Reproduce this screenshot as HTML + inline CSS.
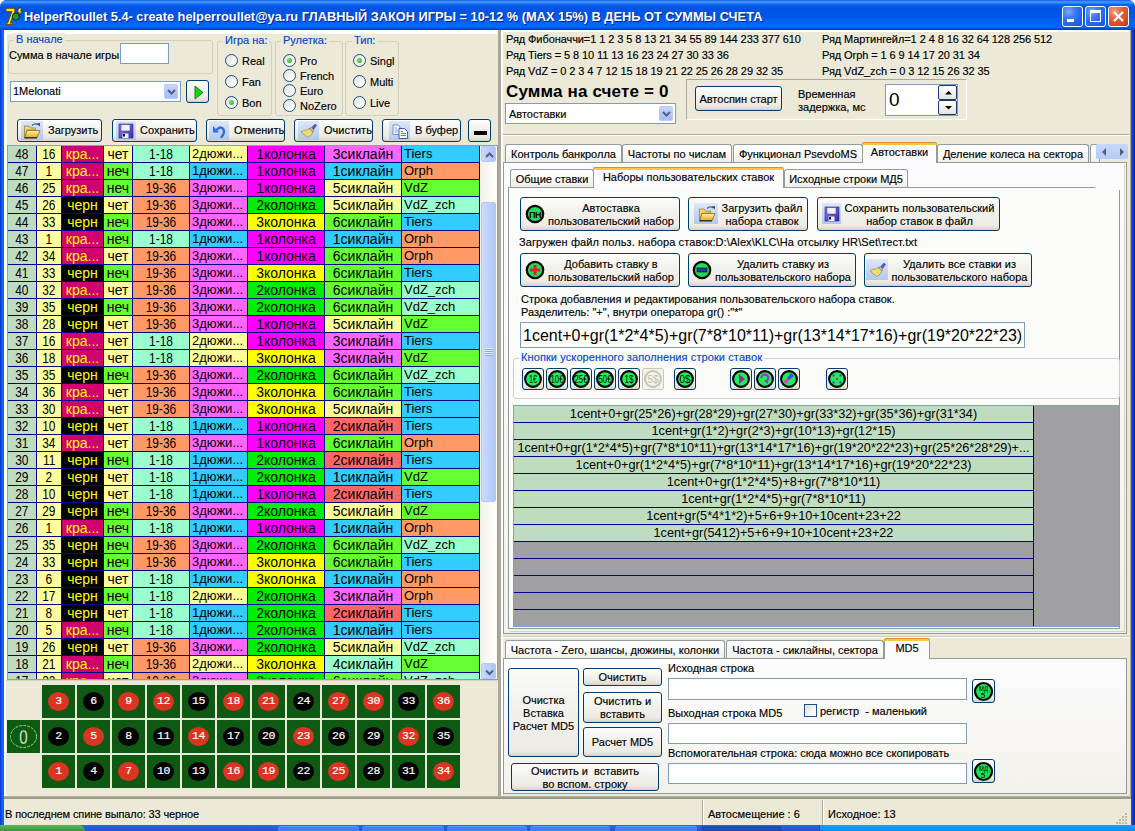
<!DOCTYPE html>
<html><head><meta charset="utf-8"><style>
*{box-sizing:border-box;margin:0;padding:0}
html,body{width:1135px;height:831px;overflow:hidden;background:#fff;position:relative}
body{font-family:"Liberation Sans",sans-serif;font-size:11px;color:#000;-webkit-text-stroke:0.15px currentColor}
div{position:absolute}
.t{white-space:nowrap;line-height:13px}
.ct{display:flex;align-items:center;justify-content:center;text-align:center;white-space:nowrap;line-height:13px}
.ct span{position:static}
.btn .ct{padding-top:1px}
.btn{border:1px solid #003C74;border-radius:3px;background:linear-gradient(180deg,#FFFFFF 0px,#FAFAF8 3px,#F1F0EB 50%,#ECEBE5 calc(100% - 5px),#E2DFD5 calc(100% - 2px),#D3CEC2 100%);}
.gb{border:1px solid #D0D0BF;border-radius:3px}
.rad{width:13px;height:13px;border-radius:50%;border:1px solid #1C5180;background:linear-gradient(135deg,#DCDCD7 0%,#FFFFFF 80%)}
.rad i{position:absolute;left:3px;top:3px;width:5px;height:5px;border-radius:50%;background:radial-gradient(circle at 40% 40%,#7BE46A,#21A121)}
.icsq{background:linear-gradient(180deg,#DDE8F8,#B0C8F0)}
</style></head>
<body>
<div style="left:0px;top:0px;width:1135px;height:831px;background:#0053E1;border-radius:7px 7px 0 0;"></div><div style="left:0px;top:28px;width:4px;height:803px;background:linear-gradient(90deg,#0831D9,#166AEE 60%,#0D5EE8);"></div><div style="left:1131px;top:28px;width:4px;height:803px;background:linear-gradient(90deg,#0D5EE8,#0831D9 60%,#001EA0);"></div><div style="left:0px;top:0px;width:1135px;height:30px;border-radius:7px 7px 0 0;background:linear-gradient(180deg,#0848D0 0px,#3A90FF 1px,#3A90FF 3px,#0A6CF8 4px,#0858E4 6px,#0054E2 9px,#0056E8 17px,#0062F8 21px,#0067FF 27px,#0058EE 28px,#0044CC 29px,#0040C4 30px);"></div><svg style="position:absolute;left:2px;top:4px;overflow:visible" width="24" height="24" viewBox="0 0 24 24"><path d="M4 4.3 L12.8 4.3 L12.8 7.2 L8.2 19.2 L11.6 19.2 L11.6 20.6 L3.8 20.6 L4.2 19.2 L5.6 19.2 L10 7.6 L4 7.6 Z" fill="#FFEE10" stroke="#7A3A00" stroke-width="0.9"/><circle cx="13.8" cy="12.6" r="3.5" fill="#1E9A2E" stroke="#0A200A" stroke-width="0.9"/><path d="M16.6 4.2 L20 4 L18.6 7.2 L20.6 7.2 L16.2 11.4 L17.4 8.6 L15.4 8.6 Z" fill="#FFEE10" stroke="#201000" stroke-width="0.6"/></svg><div class="t" style="left:24px;top:9px;color:#fff;font-weight:bold;font-size:12.8px;line-height:16px;text-shadow:1px 1px 0 #0A1E8A;-webkit-text-stroke:0;">HelperRoullet 5.4- create helperroullet@ya.ru ГЛАВНЫЙ ЗАКОН ИГРЫ = 10-12 % (MAX 15%) В ДЕНЬ ОТ СУММЫ СЧЕТА</div><div style="left:1062px;top:6px;width:21px;height:21px;border:1px solid #fff;border-radius:3px;background:radial-gradient(circle at 30% 25%,#7EA8FA 0%,#3A78F4 35%,#2260E8 70%,#1A50D8 100%);"><div style="left:4px;top:12px;width:7px;height:3px;background:#fff;"></div></div><div style="left:1085px;top:6px;width:21px;height:21px;border:1px solid #fff;border-radius:3px;background:radial-gradient(circle at 30% 25%,#7EA8FA 0%,#3A78F4 35%,#2260E8 70%,#1A50D8 100%);"><div style="left:4px;top:3px;width:11px;height:12px;border:1px solid #fff;border-top-width:3px;"></div></div><div style="left:1108px;top:6px;width:21px;height:21px;border:1px solid #fff;border-radius:3px;background:radial-gradient(circle at 30% 25%,#F4A080 0%,#E3603C 40%,#D24420 80%,#B83010 100%);"><svg style="position:absolute;left:3px;top:3px;overflow:visible" width="13" height="13" viewBox="0 0 13 13"><path d="M2 2 L11 11 M11 2 L2 11" stroke="#fff" stroke-width="2.2"/></svg></div><div style="left:4px;top:30px;width:1127px;height:795px;background:#ECE9D8;"></div><div style="left:4px;top:30px;width:493px;height:4px;background:#fff;"></div><div style="left:4px;top:30px;width:3px;height:650px;background:#fff;"></div><div style="left:4px;top:680px;width:2px;height:116px;background:#fff;"></div><div style="left:498px;top:30px;width:3px;height:766px;background:#ACA899;"></div><div style="left:501px;top:30px;width:2px;height:766px;background:#fff;"></div><div style="left:503px;top:30px;width:626px;height:2px;background:#fff;"></div><div style="left:1130px;top:30px;width:1px;height:766px;background:#ACA899;"></div><div style="left:0px;top:825px;width:1135px;height:6px;background:linear-gradient(180deg,#3168D5,#245DDA 40%,#2456D0);"></div><div style="left:0px;top:825px;width:85px;height:6px;background:linear-gradient(180deg,#5AB85A,#3C963C);border-radius:0 8px 0 0;"></div><div style="left:278px;top:826px;width:81px;height:5px;background:#3C81F3;border-radius:3px 3px 0 0;border-top:1px solid #5A9AF8;"></div><div style="left:362px;top:826px;width:82px;height:5px;background:#3C81F3;border-radius:3px 3px 0 0;border-top:1px solid #5A9AF8;"></div><div style="left:447px;top:826px;width:80px;height:5px;background:#3C81F3;border-radius:3px 3px 0 0;border-top:1px solid #5A9AF8;"></div><div style="left:530px;top:826px;width:80px;height:5px;background:#3C81F3;border-radius:3px 3px 0 0;border-top:1px solid #5A9AF8;"></div><div style="left:615px;top:826px;width:82px;height:5px;background:#3C81F3;border-radius:3px 3px 0 0;border-top:1px solid #5A9AF8;"></div><div style="left:701px;top:826px;width:81px;height:5px;background:#1E4FB0;border-radius:3px 3px 0 0;"></div><div style="left:819px;top:825px;width:316px;height:6px;background:linear-gradient(180deg,#18A0F8,#0F8AE8);border-left:1px solid #0A50C0;"></div>
<div class="gb" style="left:8px;top:40px;width:205px;height:34px;"></div><div class="t" style="left:14px;top:33px;color:#0046D5;background:#ECE9D8;padding:0 2px;line-height:13px;">В начале</div><div class="t" style="left:9px;top:48.5px;font-size:11px;">Сумма в начале игры</div><div style="left:120px;top:43px;width:49px;height:21px;background:#fff;border:1px solid #7F9DB9;"></div><div style="left:10px;top:81px;width:171px;height:21px;background:#fff;border:1px solid #7F9DB9;"><div class="t" style="left:2px;top:3px;font-size:11px;">1Melonati</div></div><div style="left:164px;top:84px;width:14px;height:15px;border-radius:2px;background:linear-gradient(180deg,#C6D5FB,#B4C8F6 50%,#A6BDF4);border:1px solid #B9CCF6;"><svg style="position:absolute;left:2px;top:4px;overflow:visible" width="9" height="6" viewBox="0 0 9 6"><path d="M1 1 L4.5 4.5 L8 1" fill="none" stroke="#4D6185" stroke-width="2"/></svg></div><div class="btn" style="left:186px;top:80px;width:23px;height:23px;"><svg style="position:absolute;left:7px;top:4px;overflow:visible" width="10" height="15" viewBox="0 0 10 15"><path d="M1 1 L9 7.5 L1 14 Z" fill="#16D416" stroke="#0A7A0A" stroke-width="0.9"/></svg></div><div class="gb" style="left:217px;top:41px;width:55px;height:75px;"></div><div class="t" style="left:223px;top:34px;color:#0046D5;background:#ECE9D8;padding:0 2px;line-height:13px;">Игра на:</div><div class="rad" style="left:225.0px;top:54.0px;"></div><div class="t" style="left:242px;top:54.5px;line-height:13px;">Real</div><div class="rad" style="left:225.0px;top:75.0px;"></div><div class="t" style="left:242px;top:75.5px;line-height:13px;">Fan</div><div class="rad" style="left:225.0px;top:96.0px;"><i></i></div><div class="t" style="left:242px;top:96.5px;line-height:13px;">Bon</div><div class="gb" style="left:275px;top:41px;width:68px;height:75px;"></div><div class="t" style="left:281px;top:34px;color:#0046D5;background:#ECE9D8;padding:0 2px;line-height:13px;">Рулетка:</div><div class="rad" style="left:283.0px;top:54.0px;"><i></i></div><div class="t" style="left:300px;top:54.5px;line-height:13px;">Pro</div><div class="rad" style="left:283.0px;top:69.0px;"></div><div class="t" style="left:300px;top:69.5px;line-height:13px;">French</div><div class="rad" style="left:283.0px;top:84.0px;"></div><div class="t" style="left:300px;top:84.5px;line-height:13px;">Euro</div><div class="rad" style="left:283.0px;top:99.0px;"></div><div class="t" style="left:300px;top:99.5px;line-height:13px;">NoZero</div><div class="gb" style="left:345px;top:41px;width:54px;height:75px;"></div><div class="t" style="left:352px;top:34px;color:#0046D5;background:#ECE9D8;padding:0 2px;line-height:13px;">Тип:</div><div class="rad" style="left:353.0px;top:54.0px;"><i></i></div><div class="t" style="left:370px;top:54.5px;line-height:13px;">Singl</div><div class="rad" style="left:353.0px;top:75.0px;"></div><div class="t" style="left:370px;top:75.5px;line-height:13px;">Multi</div><div class="rad" style="left:353.0px;top:96.0px;"></div><div class="t" style="left:370px;top:96.5px;line-height:13px;">Live</div><div class="btn" style="left:17px;top:119px;width:85px;height:23px;"><div class="icsq" style="left:3px;top:1px;width:22px;height:19px;"></div><svg style="position:absolute;left:3px;top:1px;overflow:visible" width="22" height="20" viewBox="0 0 22 20"><defs><linearGradient id="fg" x1="0" y1="0" x2="0" y2="1"><stop offset="0" stop-color="#FFF4A0"/><stop offset="1" stop-color="#E8A820"/></linearGradient></defs><path d="M3.5 5 L8 5 L9.5 7 L14.5 7 L14.5 9 L6 9 L4 16.5 L3.5 16.5 Z" fill="#F2D870" stroke="#A08040" stroke-width="0.8"/><path d="M6 9.5 L19 9.5 L16 16.8 L3.6 16.8 Z" fill="url(#fg)" stroke="#8A6A20" stroke-width="0.8"/><path d="M3.6 16.8 L16 16.8" stroke="#202020" stroke-width="1.2"/><path d="M11 4.5 Q14 1.5 17.5 4" fill="none" stroke="#4A5A80" stroke-width="1.1"/><path d="M16 2.5 L19 5.5 L19 2 Z" fill="#3A4A70"/></svg><div class="t" style="left:30px;top:4px;font-size:11px;">Загрузить</div></div><div class="btn" style="left:112px;top:119px;width:85px;height:23px;"><div class="icsq" style="left:3px;top:1px;width:20px;height:19px;"></div><svg style="position:absolute;left:3px;top:1px;overflow:visible" width="22" height="20" viewBox="0 0 22 20"><defs><linearGradient id="flg" x1="0" y1="0" x2="1" y2="1"><stop offset="0" stop-color="#8A80F0"/><stop offset="1" stop-color="#3A2AA0"/></linearGradient></defs><rect x="3" y="3" width="14" height="14" fill="url(#flg)" stroke="#2A2080" stroke-width="0.6"/><rect x="5" y="3.6" width="9" height="6.4" fill="#F0F0FA" stroke="#4A40B0" stroke-width="0.6"/><rect x="6.5" y="12.5" width="6" height="4.5" fill="#ECECF8"/><rect x="7" y="13" width="2" height="2.5" fill="#101030"/></svg><div class="t" style="left:27px;top:4px;font-size:11px;">Сохранить</div></div><div class="btn" style="left:206px;top:119px;width:79px;height:23px;"><div class="icsq" style="left:2px;top:1px;width:20px;height:19px;"></div><svg style="position:absolute;left:2px;top:1px;overflow:visible" width="22" height="20" viewBox="0 0 22 20"><path d="M8 8.5 Q12 4.5 14.5 8.5 Q16 12 12.5 16" fill="none" stroke="#2F6FE0" stroke-width="2.4" stroke-linecap="round"/><path d="M4 5 L4 11.5 L10 11.5 Z" fill="#2F6FE0"/></svg><div class="t" style="left:27px;top:4px;font-size:11px;">Отменить</div></div><div class="btn" style="left:294px;top:119px;width:79px;height:23px;"><div class="icsq" style="left:3px;top:1px;width:21px;height:19px;"></div><svg style="position:absolute;left:3px;top:1px;overflow:visible" width="22" height="20" viewBox="0 0 22 20"><path d="M13.5 7 L16.5 3.5 Q18 3 18.5 4.5 L15.5 8.5 Z" fill="#5A50D0" stroke="#3A3090" stroke-width="0.5"/><path d="M11 7.5 L13.5 6.5 L16 9 L15 11 Z" fill="#B8B8C8" stroke="#606070" stroke-width="0.5"/><path d="M3 11 Q6 9 8.5 9 L11 7.5 L15 11 L13.5 13.5 Q12 15.5 9.5 16.5 Z" fill="#EEDC70" stroke="#8A7A30" stroke-width="0.6"/></svg><div class="t" style="left:29px;top:4px;font-size:11px;">Очистить</div></div><div class="btn" style="left:382px;top:119px;width:79px;height:23px;"><div class="icsq" style="left:6px;top:1px;width:21px;height:19px;"></div><svg style="position:absolute;left:6px;top:1px;overflow:visible" width="22" height="20" viewBox="0 0 22 20"><path d="M4 4 L9 4 L11 6 L11 13.5 L4 13.5 Z" fill="#FAFCFF" stroke="#707890" stroke-width="0.8"/><path d="M5.5 7 H8 M5.5 9 H9.5 M5.5 11 H9.5" stroke="#6A8AD8" stroke-width="0.8"/><path d="M10 7.5 L15.5 7.5 L18.5 10.5 L18.5 17.5 L10 17.5 Z" fill="#FAFCFF" stroke="#2A4AB0" stroke-width="0.9"/><path d="M11.8 10.5 H14 M11.8 12.5 H17 M11.8 14.5 H17" stroke="#3A6AE0" stroke-width="0.9"/></svg><div class="t" style="left:32px;top:4px;font-size:11px;">В буфер</div></div><div class="btn" style="left:468px;top:119px;width:23px;height:23px;"><div style="left:5px;top:11px;width:13px;height:4px;background:#000;"></div></div>
<div style="left:7px;top:145px;width:491px;height:535px;overflow:hidden;border:1px solid #7A9EDF;"><div style="left:0px;top:0px;width:490px;height:535px;background:#000090;"></div><div style="left:0px;top:0px;width:28px;height:16px;background:#C0DCC0;color:#000;font-size:14px;line-height:16px;white-space:nowrap;overflow:hidden;text-align:center;padding-left:0px;-webkit-text-stroke:0"><span style="display:inline-block;position:static;transform:scaleX(0.85);transform-origin:50% 50%">48</span></div><div style="left:29px;top:0px;width:24px;height:16px;background:#FFFFA0;color:#000;font-size:14px;line-height:16px;white-space:nowrap;overflow:hidden;text-align:center;padding-left:0px;-webkit-text-stroke:0"><span style="display:inline-block;position:static;transform:scaleX(0.85);transform-origin:50% 50%">16</span></div><div style="left:54px;top:0px;width:41px;height:16px;background:#D0006C;color:#FFFF00;font-size:14px;line-height:16px;white-space:nowrap;overflow:hidden;text-align:center;padding-left:0px;-webkit-text-stroke:0">кра...</div><div style="left:96px;top:0px;width:28px;height:16px;background:#FFFFA0;color:#000;font-size:14px;line-height:16px;white-space:nowrap;overflow:hidden;text-align:center;padding-left:0px;-webkit-text-stroke:0">чет</div><div style="left:125px;top:0px;width:56px;height:16px;background:#99FFCC;color:#000;font-size:14px;line-height:16px;white-space:nowrap;overflow:hidden;text-align:center;padding-left:0px;-webkit-text-stroke:0"><span style="display:inline-block;position:static;transform:scaleX(0.85);transform-origin:50% 50%">1-18</span></div><div style="left:182px;top:0px;width:57px;height:16px;background:#FFFF99;color:#000;font-size:13px;line-height:16px;white-space:nowrap;overflow:hidden;text-align:left;padding-left:2px;-webkit-text-stroke:0">2дюжи...</div><div style="left:240px;top:0px;width:76px;height:16px;background:#FF00FF;color:#000;font-size:14px;line-height:16px;white-space:nowrap;overflow:hidden;text-align:center;padding-left:0px;-webkit-text-stroke:0">1колонка</div><div style="left:317px;top:0px;width:76px;height:16px;background:#FF66FF;color:#000;font-size:14px;line-height:16px;white-space:nowrap;overflow:hidden;text-align:center;padding-left:0px;-webkit-text-stroke:0">3сиклайн</div><div style="left:394px;top:0px;width:77px;height:16px;background:#33CCFF;color:#000;font-size:13px;line-height:16px;white-space:nowrap;overflow:hidden;text-align:left;padding-left:2px;-webkit-text-stroke:0">Tiers</div><div style="left:0px;top:17px;width:28px;height:16px;background:#C0DCC0;color:#000;font-size:14px;line-height:16px;white-space:nowrap;overflow:hidden;text-align:center;padding-left:0px;-webkit-text-stroke:0"><span style="display:inline-block;position:static;transform:scaleX(0.85);transform-origin:50% 50%">47</span></div><div style="left:29px;top:17px;width:24px;height:16px;background:#FFFFA0;color:#000;font-size:14px;line-height:16px;white-space:nowrap;overflow:hidden;text-align:center;padding-left:0px;-webkit-text-stroke:0"><span style="display:inline-block;position:static;transform:scaleX(0.85);transform-origin:50% 50%">1</span></div><div style="left:54px;top:17px;width:41px;height:16px;background:#D0006C;color:#FFFF00;font-size:14px;line-height:16px;white-space:nowrap;overflow:hidden;text-align:center;padding-left:0px;-webkit-text-stroke:0">кра...</div><div style="left:96px;top:17px;width:28px;height:16px;background:#66FF33;color:#000;font-size:14px;line-height:16px;white-space:nowrap;overflow:hidden;text-align:center;padding-left:0px;-webkit-text-stroke:0">неч</div><div style="left:125px;top:17px;width:56px;height:16px;background:#99FFCC;color:#000;font-size:14px;line-height:16px;white-space:nowrap;overflow:hidden;text-align:center;padding-left:0px;-webkit-text-stroke:0"><span style="display:inline-block;position:static;transform:scaleX(0.85);transform-origin:50% 50%">1-18</span></div><div style="left:182px;top:17px;width:57px;height:16px;background:#33CCFF;color:#000;font-size:13px;line-height:16px;white-space:nowrap;overflow:hidden;text-align:left;padding-left:2px;-webkit-text-stroke:0">1дюжи...</div><div style="left:240px;top:17px;width:76px;height:16px;background:#FF00FF;color:#000;font-size:14px;line-height:16px;white-space:nowrap;overflow:hidden;text-align:center;padding-left:0px;-webkit-text-stroke:0">1колонка</div><div style="left:317px;top:17px;width:76px;height:16px;background:#33CCFF;color:#000;font-size:14px;line-height:16px;white-space:nowrap;overflow:hidden;text-align:center;padding-left:0px;-webkit-text-stroke:0">1сиклайн</div><div style="left:394px;top:17px;width:77px;height:16px;background:#FF9966;color:#000;font-size:13px;line-height:16px;white-space:nowrap;overflow:hidden;text-align:left;padding-left:2px;-webkit-text-stroke:0">Orph</div><div style="left:0px;top:34px;width:28px;height:16px;background:#C0DCC0;color:#000;font-size:14px;line-height:16px;white-space:nowrap;overflow:hidden;text-align:center;padding-left:0px;-webkit-text-stroke:0"><span style="display:inline-block;position:static;transform:scaleX(0.85);transform-origin:50% 50%">46</span></div><div style="left:29px;top:34px;width:24px;height:16px;background:#FFFFA0;color:#000;font-size:14px;line-height:16px;white-space:nowrap;overflow:hidden;text-align:center;padding-left:0px;-webkit-text-stroke:0"><span style="display:inline-block;position:static;transform:scaleX(0.85);transform-origin:50% 50%">25</span></div><div style="left:54px;top:34px;width:41px;height:16px;background:#D0006C;color:#FFFF00;font-size:14px;line-height:16px;white-space:nowrap;overflow:hidden;text-align:center;padding-left:0px;-webkit-text-stroke:0">кра...</div><div style="left:96px;top:34px;width:28px;height:16px;background:#66FF33;color:#000;font-size:14px;line-height:16px;white-space:nowrap;overflow:hidden;text-align:center;padding-left:0px;-webkit-text-stroke:0">неч</div><div style="left:125px;top:34px;width:56px;height:16px;background:#FF9966;color:#000;font-size:14px;line-height:16px;white-space:nowrap;overflow:hidden;text-align:center;padding-left:0px;-webkit-text-stroke:0"><span style="display:inline-block;position:static;transform:scaleX(0.85);transform-origin:50% 50%">19-36</span></div><div style="left:182px;top:34px;width:57px;height:16px;background:#FF66FF;color:#000;font-size:13px;line-height:16px;white-space:nowrap;overflow:hidden;text-align:left;padding-left:2px;-webkit-text-stroke:0">3дюжи...</div><div style="left:240px;top:34px;width:76px;height:16px;background:#FF00FF;color:#000;font-size:14px;line-height:16px;white-space:nowrap;overflow:hidden;text-align:center;padding-left:0px;-webkit-text-stroke:0">1колонка</div><div style="left:317px;top:34px;width:76px;height:16px;background:#FFFF99;color:#000;font-size:14px;line-height:16px;white-space:nowrap;overflow:hidden;text-align:center;padding-left:0px;-webkit-text-stroke:0">5сиклайн</div><div style="left:394px;top:34px;width:77px;height:16px;background:#66FF33;color:#000;font-size:13px;line-height:16px;white-space:nowrap;overflow:hidden;text-align:left;padding-left:2px;-webkit-text-stroke:0">VdZ</div><div style="left:0px;top:51px;width:28px;height:16px;background:#C0DCC0;color:#000;font-size:14px;line-height:16px;white-space:nowrap;overflow:hidden;text-align:center;padding-left:0px;-webkit-text-stroke:0"><span style="display:inline-block;position:static;transform:scaleX(0.85);transform-origin:50% 50%">45</span></div><div style="left:29px;top:51px;width:24px;height:16px;background:#FFFFA0;color:#000;font-size:14px;line-height:16px;white-space:nowrap;overflow:hidden;text-align:center;padding-left:0px;-webkit-text-stroke:0"><span style="display:inline-block;position:static;transform:scaleX(0.85);transform-origin:50% 50%">26</span></div><div style="left:54px;top:51px;width:41px;height:16px;background:#000;color:#FFFF00;font-size:14px;line-height:16px;white-space:nowrap;overflow:hidden;text-align:center;padding-left:0px;-webkit-text-stroke:0">черн</div><div style="left:96px;top:51px;width:28px;height:16px;background:#FFFFA0;color:#000;font-size:14px;line-height:16px;white-space:nowrap;overflow:hidden;text-align:center;padding-left:0px;-webkit-text-stroke:0">чет</div><div style="left:125px;top:51px;width:56px;height:16px;background:#FF9966;color:#000;font-size:14px;line-height:16px;white-space:nowrap;overflow:hidden;text-align:center;padding-left:0px;-webkit-text-stroke:0"><span style="display:inline-block;position:static;transform:scaleX(0.85);transform-origin:50% 50%">19-36</span></div><div style="left:182px;top:51px;width:57px;height:16px;background:#FF66FF;color:#000;font-size:13px;line-height:16px;white-space:nowrap;overflow:hidden;text-align:left;padding-left:2px;-webkit-text-stroke:0">3дюжи...</div><div style="left:240px;top:51px;width:76px;height:16px;background:#00EE00;color:#000;font-size:14px;line-height:16px;white-space:nowrap;overflow:hidden;text-align:center;padding-left:0px;-webkit-text-stroke:0">2колонка</div><div style="left:317px;top:51px;width:76px;height:16px;background:#FFFF99;color:#000;font-size:14px;line-height:16px;white-space:nowrap;overflow:hidden;text-align:center;padding-left:0px;-webkit-text-stroke:0">5сиклайн</div><div style="left:394px;top:51px;width:77px;height:16px;background:#99FFCC;color:#000;font-size:13px;line-height:16px;white-space:nowrap;overflow:hidden;text-align:left;padding-left:2px;-webkit-text-stroke:0">VdZ_zch</div><div style="left:0px;top:68px;width:28px;height:16px;background:#C0DCC0;color:#000;font-size:14px;line-height:16px;white-space:nowrap;overflow:hidden;text-align:center;padding-left:0px;-webkit-text-stroke:0"><span style="display:inline-block;position:static;transform:scaleX(0.85);transform-origin:50% 50%">44</span></div><div style="left:29px;top:68px;width:24px;height:16px;background:#FFFFA0;color:#000;font-size:14px;line-height:16px;white-space:nowrap;overflow:hidden;text-align:center;padding-left:0px;-webkit-text-stroke:0"><span style="display:inline-block;position:static;transform:scaleX(0.85);transform-origin:50% 50%">33</span></div><div style="left:54px;top:68px;width:41px;height:16px;background:#000;color:#FFFF00;font-size:14px;line-height:16px;white-space:nowrap;overflow:hidden;text-align:center;padding-left:0px;-webkit-text-stroke:0">черн</div><div style="left:96px;top:68px;width:28px;height:16px;background:#66FF33;color:#000;font-size:14px;line-height:16px;white-space:nowrap;overflow:hidden;text-align:center;padding-left:0px;-webkit-text-stroke:0">неч</div><div style="left:125px;top:68px;width:56px;height:16px;background:#FF9966;color:#000;font-size:14px;line-height:16px;white-space:nowrap;overflow:hidden;text-align:center;padding-left:0px;-webkit-text-stroke:0"><span style="display:inline-block;position:static;transform:scaleX(0.85);transform-origin:50% 50%">19-36</span></div><div style="left:182px;top:68px;width:57px;height:16px;background:#FF66FF;color:#000;font-size:13px;line-height:16px;white-space:nowrap;overflow:hidden;text-align:left;padding-left:2px;-webkit-text-stroke:0">3дюжи...</div><div style="left:240px;top:68px;width:76px;height:16px;background:#FFFF00;color:#000;font-size:14px;line-height:16px;white-space:nowrap;overflow:hidden;text-align:center;padding-left:0px;-webkit-text-stroke:0">3колонка</div><div style="left:317px;top:68px;width:76px;height:16px;background:#66FF33;color:#000;font-size:14px;line-height:16px;white-space:nowrap;overflow:hidden;text-align:center;padding-left:0px;-webkit-text-stroke:0">6сиклайн</div><div style="left:394px;top:68px;width:77px;height:16px;background:#33CCFF;color:#000;font-size:13px;line-height:16px;white-space:nowrap;overflow:hidden;text-align:left;padding-left:2px;-webkit-text-stroke:0">Tiers</div><div style="left:0px;top:85px;width:28px;height:16px;background:#C0DCC0;color:#000;font-size:14px;line-height:16px;white-space:nowrap;overflow:hidden;text-align:center;padding-left:0px;-webkit-text-stroke:0"><span style="display:inline-block;position:static;transform:scaleX(0.85);transform-origin:50% 50%">43</span></div><div style="left:29px;top:85px;width:24px;height:16px;background:#FFFFA0;color:#000;font-size:14px;line-height:16px;white-space:nowrap;overflow:hidden;text-align:center;padding-left:0px;-webkit-text-stroke:0"><span style="display:inline-block;position:static;transform:scaleX(0.85);transform-origin:50% 50%">1</span></div><div style="left:54px;top:85px;width:41px;height:16px;background:#D0006C;color:#FFFF00;font-size:14px;line-height:16px;white-space:nowrap;overflow:hidden;text-align:center;padding-left:0px;-webkit-text-stroke:0">кра...</div><div style="left:96px;top:85px;width:28px;height:16px;background:#66FF33;color:#000;font-size:14px;line-height:16px;white-space:nowrap;overflow:hidden;text-align:center;padding-left:0px;-webkit-text-stroke:0">неч</div><div style="left:125px;top:85px;width:56px;height:16px;background:#99FFCC;color:#000;font-size:14px;line-height:16px;white-space:nowrap;overflow:hidden;text-align:center;padding-left:0px;-webkit-text-stroke:0"><span style="display:inline-block;position:static;transform:scaleX(0.85);transform-origin:50% 50%">1-18</span></div><div style="left:182px;top:85px;width:57px;height:16px;background:#33CCFF;color:#000;font-size:13px;line-height:16px;white-space:nowrap;overflow:hidden;text-align:left;padding-left:2px;-webkit-text-stroke:0">1дюжи...</div><div style="left:240px;top:85px;width:76px;height:16px;background:#FF00FF;color:#000;font-size:14px;line-height:16px;white-space:nowrap;overflow:hidden;text-align:center;padding-left:0px;-webkit-text-stroke:0">1колонка</div><div style="left:317px;top:85px;width:76px;height:16px;background:#33CCFF;color:#000;font-size:14px;line-height:16px;white-space:nowrap;overflow:hidden;text-align:center;padding-left:0px;-webkit-text-stroke:0">1сиклайн</div><div style="left:394px;top:85px;width:77px;height:16px;background:#FF9966;color:#000;font-size:13px;line-height:16px;white-space:nowrap;overflow:hidden;text-align:left;padding-left:2px;-webkit-text-stroke:0">Orph</div><div style="left:0px;top:102px;width:28px;height:16px;background:#C0DCC0;color:#000;font-size:14px;line-height:16px;white-space:nowrap;overflow:hidden;text-align:center;padding-left:0px;-webkit-text-stroke:0"><span style="display:inline-block;position:static;transform:scaleX(0.85);transform-origin:50% 50%">42</span></div><div style="left:29px;top:102px;width:24px;height:16px;background:#FFFFA0;color:#000;font-size:14px;line-height:16px;white-space:nowrap;overflow:hidden;text-align:center;padding-left:0px;-webkit-text-stroke:0"><span style="display:inline-block;position:static;transform:scaleX(0.85);transform-origin:50% 50%">34</span></div><div style="left:54px;top:102px;width:41px;height:16px;background:#D0006C;color:#FFFF00;font-size:14px;line-height:16px;white-space:nowrap;overflow:hidden;text-align:center;padding-left:0px;-webkit-text-stroke:0">кра...</div><div style="left:96px;top:102px;width:28px;height:16px;background:#FFFFA0;color:#000;font-size:14px;line-height:16px;white-space:nowrap;overflow:hidden;text-align:center;padding-left:0px;-webkit-text-stroke:0">чет</div><div style="left:125px;top:102px;width:56px;height:16px;background:#FF9966;color:#000;font-size:14px;line-height:16px;white-space:nowrap;overflow:hidden;text-align:center;padding-left:0px;-webkit-text-stroke:0"><span style="display:inline-block;position:static;transform:scaleX(0.85);transform-origin:50% 50%">19-36</span></div><div style="left:182px;top:102px;width:57px;height:16px;background:#FF66FF;color:#000;font-size:13px;line-height:16px;white-space:nowrap;overflow:hidden;text-align:left;padding-left:2px;-webkit-text-stroke:0">3дюжи...</div><div style="left:240px;top:102px;width:76px;height:16px;background:#FF00FF;color:#000;font-size:14px;line-height:16px;white-space:nowrap;overflow:hidden;text-align:center;padding-left:0px;-webkit-text-stroke:0">1колонка</div><div style="left:317px;top:102px;width:76px;height:16px;background:#66FF33;color:#000;font-size:14px;line-height:16px;white-space:nowrap;overflow:hidden;text-align:center;padding-left:0px;-webkit-text-stroke:0">6сиклайн</div><div style="left:394px;top:102px;width:77px;height:16px;background:#FF9966;color:#000;font-size:13px;line-height:16px;white-space:nowrap;overflow:hidden;text-align:left;padding-left:2px;-webkit-text-stroke:0">Orph</div><div style="left:0px;top:119px;width:28px;height:16px;background:#C0DCC0;color:#000;font-size:14px;line-height:16px;white-space:nowrap;overflow:hidden;text-align:center;padding-left:0px;-webkit-text-stroke:0"><span style="display:inline-block;position:static;transform:scaleX(0.85);transform-origin:50% 50%">41</span></div><div style="left:29px;top:119px;width:24px;height:16px;background:#FFFFA0;color:#000;font-size:14px;line-height:16px;white-space:nowrap;overflow:hidden;text-align:center;padding-left:0px;-webkit-text-stroke:0"><span style="display:inline-block;position:static;transform:scaleX(0.85);transform-origin:50% 50%">33</span></div><div style="left:54px;top:119px;width:41px;height:16px;background:#000;color:#FFFF00;font-size:14px;line-height:16px;white-space:nowrap;overflow:hidden;text-align:center;padding-left:0px;-webkit-text-stroke:0">черн</div><div style="left:96px;top:119px;width:28px;height:16px;background:#66FF33;color:#000;font-size:14px;line-height:16px;white-space:nowrap;overflow:hidden;text-align:center;padding-left:0px;-webkit-text-stroke:0">неч</div><div style="left:125px;top:119px;width:56px;height:16px;background:#FF9966;color:#000;font-size:14px;line-height:16px;white-space:nowrap;overflow:hidden;text-align:center;padding-left:0px;-webkit-text-stroke:0"><span style="display:inline-block;position:static;transform:scaleX(0.85);transform-origin:50% 50%">19-36</span></div><div style="left:182px;top:119px;width:57px;height:16px;background:#FF66FF;color:#000;font-size:13px;line-height:16px;white-space:nowrap;overflow:hidden;text-align:left;padding-left:2px;-webkit-text-stroke:0">3дюжи...</div><div style="left:240px;top:119px;width:76px;height:16px;background:#FFFF00;color:#000;font-size:14px;line-height:16px;white-space:nowrap;overflow:hidden;text-align:center;padding-left:0px;-webkit-text-stroke:0">3колонка</div><div style="left:317px;top:119px;width:76px;height:16px;background:#66FF33;color:#000;font-size:14px;line-height:16px;white-space:nowrap;overflow:hidden;text-align:center;padding-left:0px;-webkit-text-stroke:0">6сиклайн</div><div style="left:394px;top:119px;width:77px;height:16px;background:#33CCFF;color:#000;font-size:13px;line-height:16px;white-space:nowrap;overflow:hidden;text-align:left;padding-left:2px;-webkit-text-stroke:0">Tiers</div><div style="left:0px;top:136px;width:28px;height:16px;background:#C0DCC0;color:#000;font-size:14px;line-height:16px;white-space:nowrap;overflow:hidden;text-align:center;padding-left:0px;-webkit-text-stroke:0"><span style="display:inline-block;position:static;transform:scaleX(0.85);transform-origin:50% 50%">40</span></div><div style="left:29px;top:136px;width:24px;height:16px;background:#FFFFA0;color:#000;font-size:14px;line-height:16px;white-space:nowrap;overflow:hidden;text-align:center;padding-left:0px;-webkit-text-stroke:0"><span style="display:inline-block;position:static;transform:scaleX(0.85);transform-origin:50% 50%">32</span></div><div style="left:54px;top:136px;width:41px;height:16px;background:#D0006C;color:#FFFF00;font-size:14px;line-height:16px;white-space:nowrap;overflow:hidden;text-align:center;padding-left:0px;-webkit-text-stroke:0">кра...</div><div style="left:96px;top:136px;width:28px;height:16px;background:#FFFFA0;color:#000;font-size:14px;line-height:16px;white-space:nowrap;overflow:hidden;text-align:center;padding-left:0px;-webkit-text-stroke:0">чет</div><div style="left:125px;top:136px;width:56px;height:16px;background:#FF9966;color:#000;font-size:14px;line-height:16px;white-space:nowrap;overflow:hidden;text-align:center;padding-left:0px;-webkit-text-stroke:0"><span style="display:inline-block;position:static;transform:scaleX(0.85);transform-origin:50% 50%">19-36</span></div><div style="left:182px;top:136px;width:57px;height:16px;background:#FF66FF;color:#000;font-size:13px;line-height:16px;white-space:nowrap;overflow:hidden;text-align:left;padding-left:2px;-webkit-text-stroke:0">3дюжи...</div><div style="left:240px;top:136px;width:76px;height:16px;background:#00EE00;color:#000;font-size:14px;line-height:16px;white-space:nowrap;overflow:hidden;text-align:center;padding-left:0px;-webkit-text-stroke:0">2колонка</div><div style="left:317px;top:136px;width:76px;height:16px;background:#66FF33;color:#000;font-size:14px;line-height:16px;white-space:nowrap;overflow:hidden;text-align:center;padding-left:0px;-webkit-text-stroke:0">6сиклайн</div><div style="left:394px;top:136px;width:77px;height:16px;background:#99FFCC;color:#000;font-size:13px;line-height:16px;white-space:nowrap;overflow:hidden;text-align:left;padding-left:2px;-webkit-text-stroke:0">VdZ_zch</div><div style="left:0px;top:153px;width:28px;height:16px;background:#C0DCC0;color:#000;font-size:14px;line-height:16px;white-space:nowrap;overflow:hidden;text-align:center;padding-left:0px;-webkit-text-stroke:0"><span style="display:inline-block;position:static;transform:scaleX(0.85);transform-origin:50% 50%">39</span></div><div style="left:29px;top:153px;width:24px;height:16px;background:#FFFFA0;color:#000;font-size:14px;line-height:16px;white-space:nowrap;overflow:hidden;text-align:center;padding-left:0px;-webkit-text-stroke:0"><span style="display:inline-block;position:static;transform:scaleX(0.85);transform-origin:50% 50%">35</span></div><div style="left:54px;top:153px;width:41px;height:16px;background:#000;color:#FFFF00;font-size:14px;line-height:16px;white-space:nowrap;overflow:hidden;text-align:center;padding-left:0px;-webkit-text-stroke:0">черн</div><div style="left:96px;top:153px;width:28px;height:16px;background:#66FF33;color:#000;font-size:14px;line-height:16px;white-space:nowrap;overflow:hidden;text-align:center;padding-left:0px;-webkit-text-stroke:0">неч</div><div style="left:125px;top:153px;width:56px;height:16px;background:#FF9966;color:#000;font-size:14px;line-height:16px;white-space:nowrap;overflow:hidden;text-align:center;padding-left:0px;-webkit-text-stroke:0"><span style="display:inline-block;position:static;transform:scaleX(0.85);transform-origin:50% 50%">19-36</span></div><div style="left:182px;top:153px;width:57px;height:16px;background:#FF66FF;color:#000;font-size:13px;line-height:16px;white-space:nowrap;overflow:hidden;text-align:left;padding-left:2px;-webkit-text-stroke:0">3дюжи...</div><div style="left:240px;top:153px;width:76px;height:16px;background:#00EE00;color:#000;font-size:14px;line-height:16px;white-space:nowrap;overflow:hidden;text-align:center;padding-left:0px;-webkit-text-stroke:0">2колонка</div><div style="left:317px;top:153px;width:76px;height:16px;background:#66FF33;color:#000;font-size:14px;line-height:16px;white-space:nowrap;overflow:hidden;text-align:center;padding-left:0px;-webkit-text-stroke:0">6сиклайн</div><div style="left:394px;top:153px;width:77px;height:16px;background:#99FFCC;color:#000;font-size:13px;line-height:16px;white-space:nowrap;overflow:hidden;text-align:left;padding-left:2px;-webkit-text-stroke:0">VdZ_zch</div><div style="left:0px;top:170px;width:28px;height:16px;background:#C0DCC0;color:#000;font-size:14px;line-height:16px;white-space:nowrap;overflow:hidden;text-align:center;padding-left:0px;-webkit-text-stroke:0"><span style="display:inline-block;position:static;transform:scaleX(0.85);transform-origin:50% 50%">38</span></div><div style="left:29px;top:170px;width:24px;height:16px;background:#FFFFA0;color:#000;font-size:14px;line-height:16px;white-space:nowrap;overflow:hidden;text-align:center;padding-left:0px;-webkit-text-stroke:0"><span style="display:inline-block;position:static;transform:scaleX(0.85);transform-origin:50% 50%">28</span></div><div style="left:54px;top:170px;width:41px;height:16px;background:#000;color:#FFFF00;font-size:14px;line-height:16px;white-space:nowrap;overflow:hidden;text-align:center;padding-left:0px;-webkit-text-stroke:0">черн</div><div style="left:96px;top:170px;width:28px;height:16px;background:#FFFFA0;color:#000;font-size:14px;line-height:16px;white-space:nowrap;overflow:hidden;text-align:center;padding-left:0px;-webkit-text-stroke:0">чет</div><div style="left:125px;top:170px;width:56px;height:16px;background:#FF9966;color:#000;font-size:14px;line-height:16px;white-space:nowrap;overflow:hidden;text-align:center;padding-left:0px;-webkit-text-stroke:0"><span style="display:inline-block;position:static;transform:scaleX(0.85);transform-origin:50% 50%">19-36</span></div><div style="left:182px;top:170px;width:57px;height:16px;background:#FF66FF;color:#000;font-size:13px;line-height:16px;white-space:nowrap;overflow:hidden;text-align:left;padding-left:2px;-webkit-text-stroke:0">3дюжи...</div><div style="left:240px;top:170px;width:76px;height:16px;background:#FF00FF;color:#000;font-size:14px;line-height:16px;white-space:nowrap;overflow:hidden;text-align:center;padding-left:0px;-webkit-text-stroke:0">1колонка</div><div style="left:317px;top:170px;width:76px;height:16px;background:#FFFF99;color:#000;font-size:14px;line-height:16px;white-space:nowrap;overflow:hidden;text-align:center;padding-left:0px;-webkit-text-stroke:0">5сиклайн</div><div style="left:394px;top:170px;width:77px;height:16px;background:#66FF33;color:#000;font-size:13px;line-height:16px;white-space:nowrap;overflow:hidden;text-align:left;padding-left:2px;-webkit-text-stroke:0">VdZ</div><div style="left:0px;top:187px;width:28px;height:16px;background:#C0DCC0;color:#000;font-size:14px;line-height:16px;white-space:nowrap;overflow:hidden;text-align:center;padding-left:0px;-webkit-text-stroke:0"><span style="display:inline-block;position:static;transform:scaleX(0.85);transform-origin:50% 50%">37</span></div><div style="left:29px;top:187px;width:24px;height:16px;background:#FFFFA0;color:#000;font-size:14px;line-height:16px;white-space:nowrap;overflow:hidden;text-align:center;padding-left:0px;-webkit-text-stroke:0"><span style="display:inline-block;position:static;transform:scaleX(0.85);transform-origin:50% 50%">16</span></div><div style="left:54px;top:187px;width:41px;height:16px;background:#D0006C;color:#FFFF00;font-size:14px;line-height:16px;white-space:nowrap;overflow:hidden;text-align:center;padding-left:0px;-webkit-text-stroke:0">кра...</div><div style="left:96px;top:187px;width:28px;height:16px;background:#FFFFA0;color:#000;font-size:14px;line-height:16px;white-space:nowrap;overflow:hidden;text-align:center;padding-left:0px;-webkit-text-stroke:0">чет</div><div style="left:125px;top:187px;width:56px;height:16px;background:#99FFCC;color:#000;font-size:14px;line-height:16px;white-space:nowrap;overflow:hidden;text-align:center;padding-left:0px;-webkit-text-stroke:0"><span style="display:inline-block;position:static;transform:scaleX(0.85);transform-origin:50% 50%">1-18</span></div><div style="left:182px;top:187px;width:57px;height:16px;background:#FFFF99;color:#000;font-size:13px;line-height:16px;white-space:nowrap;overflow:hidden;text-align:left;padding-left:2px;-webkit-text-stroke:0">2дюжи...</div><div style="left:240px;top:187px;width:76px;height:16px;background:#FF00FF;color:#000;font-size:14px;line-height:16px;white-space:nowrap;overflow:hidden;text-align:center;padding-left:0px;-webkit-text-stroke:0">1колонка</div><div style="left:317px;top:187px;width:76px;height:16px;background:#FF66FF;color:#000;font-size:14px;line-height:16px;white-space:nowrap;overflow:hidden;text-align:center;padding-left:0px;-webkit-text-stroke:0">3сиклайн</div><div style="left:394px;top:187px;width:77px;height:16px;background:#33CCFF;color:#000;font-size:13px;line-height:16px;white-space:nowrap;overflow:hidden;text-align:left;padding-left:2px;-webkit-text-stroke:0">Tiers</div><div style="left:0px;top:204px;width:28px;height:16px;background:#C0DCC0;color:#000;font-size:14px;line-height:16px;white-space:nowrap;overflow:hidden;text-align:center;padding-left:0px;-webkit-text-stroke:0"><span style="display:inline-block;position:static;transform:scaleX(0.85);transform-origin:50% 50%">36</span></div><div style="left:29px;top:204px;width:24px;height:16px;background:#FFFFA0;color:#000;font-size:14px;line-height:16px;white-space:nowrap;overflow:hidden;text-align:center;padding-left:0px;-webkit-text-stroke:0"><span style="display:inline-block;position:static;transform:scaleX(0.85);transform-origin:50% 50%">18</span></div><div style="left:54px;top:204px;width:41px;height:16px;background:#D0006C;color:#FFFF00;font-size:14px;line-height:16px;white-space:nowrap;overflow:hidden;text-align:center;padding-left:0px;-webkit-text-stroke:0">кра...</div><div style="left:96px;top:204px;width:28px;height:16px;background:#FFFFA0;color:#000;font-size:14px;line-height:16px;white-space:nowrap;overflow:hidden;text-align:center;padding-left:0px;-webkit-text-stroke:0">чет</div><div style="left:125px;top:204px;width:56px;height:16px;background:#99FFCC;color:#000;font-size:14px;line-height:16px;white-space:nowrap;overflow:hidden;text-align:center;padding-left:0px;-webkit-text-stroke:0"><span style="display:inline-block;position:static;transform:scaleX(0.85);transform-origin:50% 50%">1-18</span></div><div style="left:182px;top:204px;width:57px;height:16px;background:#FFFF99;color:#000;font-size:13px;line-height:16px;white-space:nowrap;overflow:hidden;text-align:left;padding-left:2px;-webkit-text-stroke:0">2дюжи...</div><div style="left:240px;top:204px;width:76px;height:16px;background:#FFFF00;color:#000;font-size:14px;line-height:16px;white-space:nowrap;overflow:hidden;text-align:center;padding-left:0px;-webkit-text-stroke:0">3колонка</div><div style="left:317px;top:204px;width:76px;height:16px;background:#FF66FF;color:#000;font-size:14px;line-height:16px;white-space:nowrap;overflow:hidden;text-align:center;padding-left:0px;-webkit-text-stroke:0">3сиклайн</div><div style="left:394px;top:204px;width:77px;height:16px;background:#66FF33;color:#000;font-size:13px;line-height:16px;white-space:nowrap;overflow:hidden;text-align:left;padding-left:2px;-webkit-text-stroke:0">VdZ</div><div style="left:0px;top:221px;width:28px;height:16px;background:#C0DCC0;color:#000;font-size:14px;line-height:16px;white-space:nowrap;overflow:hidden;text-align:center;padding-left:0px;-webkit-text-stroke:0"><span style="display:inline-block;position:static;transform:scaleX(0.85);transform-origin:50% 50%">35</span></div><div style="left:29px;top:221px;width:24px;height:16px;background:#FFFFA0;color:#000;font-size:14px;line-height:16px;white-space:nowrap;overflow:hidden;text-align:center;padding-left:0px;-webkit-text-stroke:0"><span style="display:inline-block;position:static;transform:scaleX(0.85);transform-origin:50% 50%">35</span></div><div style="left:54px;top:221px;width:41px;height:16px;background:#000;color:#FFFF00;font-size:14px;line-height:16px;white-space:nowrap;overflow:hidden;text-align:center;padding-left:0px;-webkit-text-stroke:0">черн</div><div style="left:96px;top:221px;width:28px;height:16px;background:#66FF33;color:#000;font-size:14px;line-height:16px;white-space:nowrap;overflow:hidden;text-align:center;padding-left:0px;-webkit-text-stroke:0">неч</div><div style="left:125px;top:221px;width:56px;height:16px;background:#FF9966;color:#000;font-size:14px;line-height:16px;white-space:nowrap;overflow:hidden;text-align:center;padding-left:0px;-webkit-text-stroke:0"><span style="display:inline-block;position:static;transform:scaleX(0.85);transform-origin:50% 50%">19-36</span></div><div style="left:182px;top:221px;width:57px;height:16px;background:#FF66FF;color:#000;font-size:13px;line-height:16px;white-space:nowrap;overflow:hidden;text-align:left;padding-left:2px;-webkit-text-stroke:0">3дюжи...</div><div style="left:240px;top:221px;width:76px;height:16px;background:#00EE00;color:#000;font-size:14px;line-height:16px;white-space:nowrap;overflow:hidden;text-align:center;padding-left:0px;-webkit-text-stroke:0">2колонка</div><div style="left:317px;top:221px;width:76px;height:16px;background:#66FF33;color:#000;font-size:14px;line-height:16px;white-space:nowrap;overflow:hidden;text-align:center;padding-left:0px;-webkit-text-stroke:0">6сиклайн</div><div style="left:394px;top:221px;width:77px;height:16px;background:#99FFCC;color:#000;font-size:13px;line-height:16px;white-space:nowrap;overflow:hidden;text-align:left;padding-left:2px;-webkit-text-stroke:0">VdZ_zch</div><div style="left:0px;top:238px;width:28px;height:16px;background:#C0DCC0;color:#000;font-size:14px;line-height:16px;white-space:nowrap;overflow:hidden;text-align:center;padding-left:0px;-webkit-text-stroke:0"><span style="display:inline-block;position:static;transform:scaleX(0.85);transform-origin:50% 50%">34</span></div><div style="left:29px;top:238px;width:24px;height:16px;background:#FFFFA0;color:#000;font-size:14px;line-height:16px;white-space:nowrap;overflow:hidden;text-align:center;padding-left:0px;-webkit-text-stroke:0"><span style="display:inline-block;position:static;transform:scaleX(0.85);transform-origin:50% 50%">36</span></div><div style="left:54px;top:238px;width:41px;height:16px;background:#D0006C;color:#FFFF00;font-size:14px;line-height:16px;white-space:nowrap;overflow:hidden;text-align:center;padding-left:0px;-webkit-text-stroke:0">кра...</div><div style="left:96px;top:238px;width:28px;height:16px;background:#FFFFA0;color:#000;font-size:14px;line-height:16px;white-space:nowrap;overflow:hidden;text-align:center;padding-left:0px;-webkit-text-stroke:0">чет</div><div style="left:125px;top:238px;width:56px;height:16px;background:#FF9966;color:#000;font-size:14px;line-height:16px;white-space:nowrap;overflow:hidden;text-align:center;padding-left:0px;-webkit-text-stroke:0"><span style="display:inline-block;position:static;transform:scaleX(0.85);transform-origin:50% 50%">19-36</span></div><div style="left:182px;top:238px;width:57px;height:16px;background:#FF66FF;color:#000;font-size:13px;line-height:16px;white-space:nowrap;overflow:hidden;text-align:left;padding-left:2px;-webkit-text-stroke:0">3дюжи...</div><div style="left:240px;top:238px;width:76px;height:16px;background:#FFFF00;color:#000;font-size:14px;line-height:16px;white-space:nowrap;overflow:hidden;text-align:center;padding-left:0px;-webkit-text-stroke:0">3колонка</div><div style="left:317px;top:238px;width:76px;height:16px;background:#66FF33;color:#000;font-size:14px;line-height:16px;white-space:nowrap;overflow:hidden;text-align:center;padding-left:0px;-webkit-text-stroke:0">6сиклайн</div><div style="left:394px;top:238px;width:77px;height:16px;background:#33CCFF;color:#000;font-size:13px;line-height:16px;white-space:nowrap;overflow:hidden;text-align:left;padding-left:2px;-webkit-text-stroke:0">Tiers</div><div style="left:0px;top:255px;width:28px;height:16px;background:#C0DCC0;color:#000;font-size:14px;line-height:16px;white-space:nowrap;overflow:hidden;text-align:center;padding-left:0px;-webkit-text-stroke:0"><span style="display:inline-block;position:static;transform:scaleX(0.85);transform-origin:50% 50%">33</span></div><div style="left:29px;top:255px;width:24px;height:16px;background:#FFFFA0;color:#000;font-size:14px;line-height:16px;white-space:nowrap;overflow:hidden;text-align:center;padding-left:0px;-webkit-text-stroke:0"><span style="display:inline-block;position:static;transform:scaleX(0.85);transform-origin:50% 50%">30</span></div><div style="left:54px;top:255px;width:41px;height:16px;background:#D0006C;color:#FFFF00;font-size:14px;line-height:16px;white-space:nowrap;overflow:hidden;text-align:center;padding-left:0px;-webkit-text-stroke:0">кра...</div><div style="left:96px;top:255px;width:28px;height:16px;background:#FFFFA0;color:#000;font-size:14px;line-height:16px;white-space:nowrap;overflow:hidden;text-align:center;padding-left:0px;-webkit-text-stroke:0">чет</div><div style="left:125px;top:255px;width:56px;height:16px;background:#FF9966;color:#000;font-size:14px;line-height:16px;white-space:nowrap;overflow:hidden;text-align:center;padding-left:0px;-webkit-text-stroke:0"><span style="display:inline-block;position:static;transform:scaleX(0.85);transform-origin:50% 50%">19-36</span></div><div style="left:182px;top:255px;width:57px;height:16px;background:#FF66FF;color:#000;font-size:13px;line-height:16px;white-space:nowrap;overflow:hidden;text-align:left;padding-left:2px;-webkit-text-stroke:0">3дюжи...</div><div style="left:240px;top:255px;width:76px;height:16px;background:#FFFF00;color:#000;font-size:14px;line-height:16px;white-space:nowrap;overflow:hidden;text-align:center;padding-left:0px;-webkit-text-stroke:0">3колонка</div><div style="left:317px;top:255px;width:76px;height:16px;background:#FFFF99;color:#000;font-size:14px;line-height:16px;white-space:nowrap;overflow:hidden;text-align:center;padding-left:0px;-webkit-text-stroke:0">5сиклайн</div><div style="left:394px;top:255px;width:77px;height:16px;background:#33CCFF;color:#000;font-size:13px;line-height:16px;white-space:nowrap;overflow:hidden;text-align:left;padding-left:2px;-webkit-text-stroke:0">Tiers</div><div style="left:0px;top:272px;width:28px;height:16px;background:#C0DCC0;color:#000;font-size:14px;line-height:16px;white-space:nowrap;overflow:hidden;text-align:center;padding-left:0px;-webkit-text-stroke:0"><span style="display:inline-block;position:static;transform:scaleX(0.85);transform-origin:50% 50%">32</span></div><div style="left:29px;top:272px;width:24px;height:16px;background:#FFFFA0;color:#000;font-size:14px;line-height:16px;white-space:nowrap;overflow:hidden;text-align:center;padding-left:0px;-webkit-text-stroke:0"><span style="display:inline-block;position:static;transform:scaleX(0.85);transform-origin:50% 50%">10</span></div><div style="left:54px;top:272px;width:41px;height:16px;background:#000;color:#FFFF00;font-size:14px;line-height:16px;white-space:nowrap;overflow:hidden;text-align:center;padding-left:0px;-webkit-text-stroke:0">черн</div><div style="left:96px;top:272px;width:28px;height:16px;background:#FFFFA0;color:#000;font-size:14px;line-height:16px;white-space:nowrap;overflow:hidden;text-align:center;padding-left:0px;-webkit-text-stroke:0">чет</div><div style="left:125px;top:272px;width:56px;height:16px;background:#99FFCC;color:#000;font-size:14px;line-height:16px;white-space:nowrap;overflow:hidden;text-align:center;padding-left:0px;-webkit-text-stroke:0"><span style="display:inline-block;position:static;transform:scaleX(0.85);transform-origin:50% 50%">1-18</span></div><div style="left:182px;top:272px;width:57px;height:16px;background:#33CCFF;color:#000;font-size:13px;line-height:16px;white-space:nowrap;overflow:hidden;text-align:left;padding-left:2px;-webkit-text-stroke:0">1дюжи...</div><div style="left:240px;top:272px;width:76px;height:16px;background:#FF00FF;color:#000;font-size:14px;line-height:16px;white-space:nowrap;overflow:hidden;text-align:center;padding-left:0px;-webkit-text-stroke:0">1колонка</div><div style="left:317px;top:272px;width:76px;height:16px;background:#FF6666;color:#000;font-size:14px;line-height:16px;white-space:nowrap;overflow:hidden;text-align:center;padding-left:0px;-webkit-text-stroke:0">2сиклайн</div><div style="left:394px;top:272px;width:77px;height:16px;background:#33CCFF;color:#000;font-size:13px;line-height:16px;white-space:nowrap;overflow:hidden;text-align:left;padding-left:2px;-webkit-text-stroke:0">Tiers</div><div style="left:0px;top:289px;width:28px;height:16px;background:#C0DCC0;color:#000;font-size:14px;line-height:16px;white-space:nowrap;overflow:hidden;text-align:center;padding-left:0px;-webkit-text-stroke:0"><span style="display:inline-block;position:static;transform:scaleX(0.85);transform-origin:50% 50%">31</span></div><div style="left:29px;top:289px;width:24px;height:16px;background:#FFFFA0;color:#000;font-size:14px;line-height:16px;white-space:nowrap;overflow:hidden;text-align:center;padding-left:0px;-webkit-text-stroke:0"><span style="display:inline-block;position:static;transform:scaleX(0.85);transform-origin:50% 50%">34</span></div><div style="left:54px;top:289px;width:41px;height:16px;background:#D0006C;color:#FFFF00;font-size:14px;line-height:16px;white-space:nowrap;overflow:hidden;text-align:center;padding-left:0px;-webkit-text-stroke:0">кра...</div><div style="left:96px;top:289px;width:28px;height:16px;background:#FFFFA0;color:#000;font-size:14px;line-height:16px;white-space:nowrap;overflow:hidden;text-align:center;padding-left:0px;-webkit-text-stroke:0">чет</div><div style="left:125px;top:289px;width:56px;height:16px;background:#FF9966;color:#000;font-size:14px;line-height:16px;white-space:nowrap;overflow:hidden;text-align:center;padding-left:0px;-webkit-text-stroke:0"><span style="display:inline-block;position:static;transform:scaleX(0.85);transform-origin:50% 50%">19-36</span></div><div style="left:182px;top:289px;width:57px;height:16px;background:#FF66FF;color:#000;font-size:13px;line-height:16px;white-space:nowrap;overflow:hidden;text-align:left;padding-left:2px;-webkit-text-stroke:0">3дюжи...</div><div style="left:240px;top:289px;width:76px;height:16px;background:#FF00FF;color:#000;font-size:14px;line-height:16px;white-space:nowrap;overflow:hidden;text-align:center;padding-left:0px;-webkit-text-stroke:0">1колонка</div><div style="left:317px;top:289px;width:76px;height:16px;background:#66FF33;color:#000;font-size:14px;line-height:16px;white-space:nowrap;overflow:hidden;text-align:center;padding-left:0px;-webkit-text-stroke:0">6сиклайн</div><div style="left:394px;top:289px;width:77px;height:16px;background:#FF9966;color:#000;font-size:13px;line-height:16px;white-space:nowrap;overflow:hidden;text-align:left;padding-left:2px;-webkit-text-stroke:0">Orph</div><div style="left:0px;top:306px;width:28px;height:16px;background:#C0DCC0;color:#000;font-size:14px;line-height:16px;white-space:nowrap;overflow:hidden;text-align:center;padding-left:0px;-webkit-text-stroke:0"><span style="display:inline-block;position:static;transform:scaleX(0.85);transform-origin:50% 50%">30</span></div><div style="left:29px;top:306px;width:24px;height:16px;background:#FFFFA0;color:#000;font-size:14px;line-height:16px;white-space:nowrap;overflow:hidden;text-align:center;padding-left:0px;-webkit-text-stroke:0"><span style="display:inline-block;position:static;transform:scaleX(0.85);transform-origin:50% 50%">11</span></div><div style="left:54px;top:306px;width:41px;height:16px;background:#000;color:#FFFF00;font-size:14px;line-height:16px;white-space:nowrap;overflow:hidden;text-align:center;padding-left:0px;-webkit-text-stroke:0">черн</div><div style="left:96px;top:306px;width:28px;height:16px;background:#66FF33;color:#000;font-size:14px;line-height:16px;white-space:nowrap;overflow:hidden;text-align:center;padding-left:0px;-webkit-text-stroke:0">неч</div><div style="left:125px;top:306px;width:56px;height:16px;background:#99FFCC;color:#000;font-size:14px;line-height:16px;white-space:nowrap;overflow:hidden;text-align:center;padding-left:0px;-webkit-text-stroke:0"><span style="display:inline-block;position:static;transform:scaleX(0.85);transform-origin:50% 50%">1-18</span></div><div style="left:182px;top:306px;width:57px;height:16px;background:#33CCFF;color:#000;font-size:13px;line-height:16px;white-space:nowrap;overflow:hidden;text-align:left;padding-left:2px;-webkit-text-stroke:0">1дюжи...</div><div style="left:240px;top:306px;width:76px;height:16px;background:#00EE00;color:#000;font-size:14px;line-height:16px;white-space:nowrap;overflow:hidden;text-align:center;padding-left:0px;-webkit-text-stroke:0">2колонка</div><div style="left:317px;top:306px;width:76px;height:16px;background:#FF6666;color:#000;font-size:14px;line-height:16px;white-space:nowrap;overflow:hidden;text-align:center;padding-left:0px;-webkit-text-stroke:0">2сиклайн</div><div style="left:394px;top:306px;width:77px;height:16px;background:#33CCFF;color:#000;font-size:13px;line-height:16px;white-space:nowrap;overflow:hidden;text-align:left;padding-left:2px;-webkit-text-stroke:0">Tiers</div><div style="left:0px;top:323px;width:28px;height:16px;background:#C0DCC0;color:#000;font-size:14px;line-height:16px;white-space:nowrap;overflow:hidden;text-align:center;padding-left:0px;-webkit-text-stroke:0"><span style="display:inline-block;position:static;transform:scaleX(0.85);transform-origin:50% 50%">29</span></div><div style="left:29px;top:323px;width:24px;height:16px;background:#FFFFA0;color:#000;font-size:14px;line-height:16px;white-space:nowrap;overflow:hidden;text-align:center;padding-left:0px;-webkit-text-stroke:0"><span style="display:inline-block;position:static;transform:scaleX(0.85);transform-origin:50% 50%">2</span></div><div style="left:54px;top:323px;width:41px;height:16px;background:#000;color:#FFFF00;font-size:14px;line-height:16px;white-space:nowrap;overflow:hidden;text-align:center;padding-left:0px;-webkit-text-stroke:0">черн</div><div style="left:96px;top:323px;width:28px;height:16px;background:#FFFFA0;color:#000;font-size:14px;line-height:16px;white-space:nowrap;overflow:hidden;text-align:center;padding-left:0px;-webkit-text-stroke:0">чет</div><div style="left:125px;top:323px;width:56px;height:16px;background:#99FFCC;color:#000;font-size:14px;line-height:16px;white-space:nowrap;overflow:hidden;text-align:center;padding-left:0px;-webkit-text-stroke:0"><span style="display:inline-block;position:static;transform:scaleX(0.85);transform-origin:50% 50%">1-18</span></div><div style="left:182px;top:323px;width:57px;height:16px;background:#33CCFF;color:#000;font-size:13px;line-height:16px;white-space:nowrap;overflow:hidden;text-align:left;padding-left:2px;-webkit-text-stroke:0">1дюжи...</div><div style="left:240px;top:323px;width:76px;height:16px;background:#00EE00;color:#000;font-size:14px;line-height:16px;white-space:nowrap;overflow:hidden;text-align:center;padding-left:0px;-webkit-text-stroke:0">2колонка</div><div style="left:317px;top:323px;width:76px;height:16px;background:#33CCFF;color:#000;font-size:14px;line-height:16px;white-space:nowrap;overflow:hidden;text-align:center;padding-left:0px;-webkit-text-stroke:0">1сиклайн</div><div style="left:394px;top:323px;width:77px;height:16px;background:#66FF33;color:#000;font-size:13px;line-height:16px;white-space:nowrap;overflow:hidden;text-align:left;padding-left:2px;-webkit-text-stroke:0">VdZ</div><div style="left:0px;top:340px;width:28px;height:16px;background:#C0DCC0;color:#000;font-size:14px;line-height:16px;white-space:nowrap;overflow:hidden;text-align:center;padding-left:0px;-webkit-text-stroke:0"><span style="display:inline-block;position:static;transform:scaleX(0.85);transform-origin:50% 50%">28</span></div><div style="left:29px;top:340px;width:24px;height:16px;background:#FFFFA0;color:#000;font-size:14px;line-height:16px;white-space:nowrap;overflow:hidden;text-align:center;padding-left:0px;-webkit-text-stroke:0"><span style="display:inline-block;position:static;transform:scaleX(0.85);transform-origin:50% 50%">10</span></div><div style="left:54px;top:340px;width:41px;height:16px;background:#000;color:#FFFF00;font-size:14px;line-height:16px;white-space:nowrap;overflow:hidden;text-align:center;padding-left:0px;-webkit-text-stroke:0">черн</div><div style="left:96px;top:340px;width:28px;height:16px;background:#FFFFA0;color:#000;font-size:14px;line-height:16px;white-space:nowrap;overflow:hidden;text-align:center;padding-left:0px;-webkit-text-stroke:0">чет</div><div style="left:125px;top:340px;width:56px;height:16px;background:#99FFCC;color:#000;font-size:14px;line-height:16px;white-space:nowrap;overflow:hidden;text-align:center;padding-left:0px;-webkit-text-stroke:0"><span style="display:inline-block;position:static;transform:scaleX(0.85);transform-origin:50% 50%">1-18</span></div><div style="left:182px;top:340px;width:57px;height:16px;background:#33CCFF;color:#000;font-size:13px;line-height:16px;white-space:nowrap;overflow:hidden;text-align:left;padding-left:2px;-webkit-text-stroke:0">1дюжи...</div><div style="left:240px;top:340px;width:76px;height:16px;background:#FF00FF;color:#000;font-size:14px;line-height:16px;white-space:nowrap;overflow:hidden;text-align:center;padding-left:0px;-webkit-text-stroke:0">1колонка</div><div style="left:317px;top:340px;width:76px;height:16px;background:#FF6666;color:#000;font-size:14px;line-height:16px;white-space:nowrap;overflow:hidden;text-align:center;padding-left:0px;-webkit-text-stroke:0">2сиклайн</div><div style="left:394px;top:340px;width:77px;height:16px;background:#33CCFF;color:#000;font-size:13px;line-height:16px;white-space:nowrap;overflow:hidden;text-align:left;padding-left:2px;-webkit-text-stroke:0">Tiers</div><div style="left:0px;top:357px;width:28px;height:16px;background:#C0DCC0;color:#000;font-size:14px;line-height:16px;white-space:nowrap;overflow:hidden;text-align:center;padding-left:0px;-webkit-text-stroke:0"><span style="display:inline-block;position:static;transform:scaleX(0.85);transform-origin:50% 50%">27</span></div><div style="left:29px;top:357px;width:24px;height:16px;background:#FFFFA0;color:#000;font-size:14px;line-height:16px;white-space:nowrap;overflow:hidden;text-align:center;padding-left:0px;-webkit-text-stroke:0"><span style="display:inline-block;position:static;transform:scaleX(0.85);transform-origin:50% 50%">29</span></div><div style="left:54px;top:357px;width:41px;height:16px;background:#000;color:#FFFF00;font-size:14px;line-height:16px;white-space:nowrap;overflow:hidden;text-align:center;padding-left:0px;-webkit-text-stroke:0">черн</div><div style="left:96px;top:357px;width:28px;height:16px;background:#66FF33;color:#000;font-size:14px;line-height:16px;white-space:nowrap;overflow:hidden;text-align:center;padding-left:0px;-webkit-text-stroke:0">неч</div><div style="left:125px;top:357px;width:56px;height:16px;background:#FF9966;color:#000;font-size:14px;line-height:16px;white-space:nowrap;overflow:hidden;text-align:center;padding-left:0px;-webkit-text-stroke:0"><span style="display:inline-block;position:static;transform:scaleX(0.85);transform-origin:50% 50%">19-36</span></div><div style="left:182px;top:357px;width:57px;height:16px;background:#FF66FF;color:#000;font-size:13px;line-height:16px;white-space:nowrap;overflow:hidden;text-align:left;padding-left:2px;-webkit-text-stroke:0">3дюжи...</div><div style="left:240px;top:357px;width:76px;height:16px;background:#00EE00;color:#000;font-size:14px;line-height:16px;white-space:nowrap;overflow:hidden;text-align:center;padding-left:0px;-webkit-text-stroke:0">2колонка</div><div style="left:317px;top:357px;width:76px;height:16px;background:#FFFF99;color:#000;font-size:14px;line-height:16px;white-space:nowrap;overflow:hidden;text-align:center;padding-left:0px;-webkit-text-stroke:0">5сиклайн</div><div style="left:394px;top:357px;width:77px;height:16px;background:#66FF33;color:#000;font-size:13px;line-height:16px;white-space:nowrap;overflow:hidden;text-align:left;padding-left:2px;-webkit-text-stroke:0">VdZ</div><div style="left:0px;top:374px;width:28px;height:16px;background:#C0DCC0;color:#000;font-size:14px;line-height:16px;white-space:nowrap;overflow:hidden;text-align:center;padding-left:0px;-webkit-text-stroke:0"><span style="display:inline-block;position:static;transform:scaleX(0.85);transform-origin:50% 50%">26</span></div><div style="left:29px;top:374px;width:24px;height:16px;background:#FFFFA0;color:#000;font-size:14px;line-height:16px;white-space:nowrap;overflow:hidden;text-align:center;padding-left:0px;-webkit-text-stroke:0"><span style="display:inline-block;position:static;transform:scaleX(0.85);transform-origin:50% 50%">1</span></div><div style="left:54px;top:374px;width:41px;height:16px;background:#D0006C;color:#FFFF00;font-size:14px;line-height:16px;white-space:nowrap;overflow:hidden;text-align:center;padding-left:0px;-webkit-text-stroke:0">кра...</div><div style="left:96px;top:374px;width:28px;height:16px;background:#66FF33;color:#000;font-size:14px;line-height:16px;white-space:nowrap;overflow:hidden;text-align:center;padding-left:0px;-webkit-text-stroke:0">неч</div><div style="left:125px;top:374px;width:56px;height:16px;background:#99FFCC;color:#000;font-size:14px;line-height:16px;white-space:nowrap;overflow:hidden;text-align:center;padding-left:0px;-webkit-text-stroke:0"><span style="display:inline-block;position:static;transform:scaleX(0.85);transform-origin:50% 50%">1-18</span></div><div style="left:182px;top:374px;width:57px;height:16px;background:#33CCFF;color:#000;font-size:13px;line-height:16px;white-space:nowrap;overflow:hidden;text-align:left;padding-left:2px;-webkit-text-stroke:0">1дюжи...</div><div style="left:240px;top:374px;width:76px;height:16px;background:#FF00FF;color:#000;font-size:14px;line-height:16px;white-space:nowrap;overflow:hidden;text-align:center;padding-left:0px;-webkit-text-stroke:0">1колонка</div><div style="left:317px;top:374px;width:76px;height:16px;background:#33CCFF;color:#000;font-size:14px;line-height:16px;white-space:nowrap;overflow:hidden;text-align:center;padding-left:0px;-webkit-text-stroke:0">1сиклайн</div><div style="left:394px;top:374px;width:77px;height:16px;background:#FF9966;color:#000;font-size:13px;line-height:16px;white-space:nowrap;overflow:hidden;text-align:left;padding-left:2px;-webkit-text-stroke:0">Orph</div><div style="left:0px;top:391px;width:28px;height:16px;background:#C0DCC0;color:#000;font-size:14px;line-height:16px;white-space:nowrap;overflow:hidden;text-align:center;padding-left:0px;-webkit-text-stroke:0"><span style="display:inline-block;position:static;transform:scaleX(0.85);transform-origin:50% 50%">25</span></div><div style="left:29px;top:391px;width:24px;height:16px;background:#FFFFA0;color:#000;font-size:14px;line-height:16px;white-space:nowrap;overflow:hidden;text-align:center;padding-left:0px;-webkit-text-stroke:0"><span style="display:inline-block;position:static;transform:scaleX(0.85);transform-origin:50% 50%">35</span></div><div style="left:54px;top:391px;width:41px;height:16px;background:#000;color:#FFFF00;font-size:14px;line-height:16px;white-space:nowrap;overflow:hidden;text-align:center;padding-left:0px;-webkit-text-stroke:0">черн</div><div style="left:96px;top:391px;width:28px;height:16px;background:#66FF33;color:#000;font-size:14px;line-height:16px;white-space:nowrap;overflow:hidden;text-align:center;padding-left:0px;-webkit-text-stroke:0">неч</div><div style="left:125px;top:391px;width:56px;height:16px;background:#FF9966;color:#000;font-size:14px;line-height:16px;white-space:nowrap;overflow:hidden;text-align:center;padding-left:0px;-webkit-text-stroke:0"><span style="display:inline-block;position:static;transform:scaleX(0.85);transform-origin:50% 50%">19-36</span></div><div style="left:182px;top:391px;width:57px;height:16px;background:#FF66FF;color:#000;font-size:13px;line-height:16px;white-space:nowrap;overflow:hidden;text-align:left;padding-left:2px;-webkit-text-stroke:0">3дюжи...</div><div style="left:240px;top:391px;width:76px;height:16px;background:#00EE00;color:#000;font-size:14px;line-height:16px;white-space:nowrap;overflow:hidden;text-align:center;padding-left:0px;-webkit-text-stroke:0">2колонка</div><div style="left:317px;top:391px;width:76px;height:16px;background:#66FF33;color:#000;font-size:14px;line-height:16px;white-space:nowrap;overflow:hidden;text-align:center;padding-left:0px;-webkit-text-stroke:0">6сиклайн</div><div style="left:394px;top:391px;width:77px;height:16px;background:#99FFCC;color:#000;font-size:13px;line-height:16px;white-space:nowrap;overflow:hidden;text-align:left;padding-left:2px;-webkit-text-stroke:0">VdZ_zch</div><div style="left:0px;top:408px;width:28px;height:16px;background:#C0DCC0;color:#000;font-size:14px;line-height:16px;white-space:nowrap;overflow:hidden;text-align:center;padding-left:0px;-webkit-text-stroke:0"><span style="display:inline-block;position:static;transform:scaleX(0.85);transform-origin:50% 50%">24</span></div><div style="left:29px;top:408px;width:24px;height:16px;background:#FFFFA0;color:#000;font-size:14px;line-height:16px;white-space:nowrap;overflow:hidden;text-align:center;padding-left:0px;-webkit-text-stroke:0"><span style="display:inline-block;position:static;transform:scaleX(0.85);transform-origin:50% 50%">33</span></div><div style="left:54px;top:408px;width:41px;height:16px;background:#000;color:#FFFF00;font-size:14px;line-height:16px;white-space:nowrap;overflow:hidden;text-align:center;padding-left:0px;-webkit-text-stroke:0">черн</div><div style="left:96px;top:408px;width:28px;height:16px;background:#66FF33;color:#000;font-size:14px;line-height:16px;white-space:nowrap;overflow:hidden;text-align:center;padding-left:0px;-webkit-text-stroke:0">неч</div><div style="left:125px;top:408px;width:56px;height:16px;background:#FF9966;color:#000;font-size:14px;line-height:16px;white-space:nowrap;overflow:hidden;text-align:center;padding-left:0px;-webkit-text-stroke:0"><span style="display:inline-block;position:static;transform:scaleX(0.85);transform-origin:50% 50%">19-36</span></div><div style="left:182px;top:408px;width:57px;height:16px;background:#FF66FF;color:#000;font-size:13px;line-height:16px;white-space:nowrap;overflow:hidden;text-align:left;padding-left:2px;-webkit-text-stroke:0">3дюжи...</div><div style="left:240px;top:408px;width:76px;height:16px;background:#FFFF00;color:#000;font-size:14px;line-height:16px;white-space:nowrap;overflow:hidden;text-align:center;padding-left:0px;-webkit-text-stroke:0">3колонка</div><div style="left:317px;top:408px;width:76px;height:16px;background:#66FF33;color:#000;font-size:14px;line-height:16px;white-space:nowrap;overflow:hidden;text-align:center;padding-left:0px;-webkit-text-stroke:0">6сиклайн</div><div style="left:394px;top:408px;width:77px;height:16px;background:#33CCFF;color:#000;font-size:13px;line-height:16px;white-space:nowrap;overflow:hidden;text-align:left;padding-left:2px;-webkit-text-stroke:0">Tiers</div><div style="left:0px;top:425px;width:28px;height:16px;background:#C0DCC0;color:#000;font-size:14px;line-height:16px;white-space:nowrap;overflow:hidden;text-align:center;padding-left:0px;-webkit-text-stroke:0"><span style="display:inline-block;position:static;transform:scaleX(0.85);transform-origin:50% 50%">23</span></div><div style="left:29px;top:425px;width:24px;height:16px;background:#FFFFA0;color:#000;font-size:14px;line-height:16px;white-space:nowrap;overflow:hidden;text-align:center;padding-left:0px;-webkit-text-stroke:0"><span style="display:inline-block;position:static;transform:scaleX(0.85);transform-origin:50% 50%">6</span></div><div style="left:54px;top:425px;width:41px;height:16px;background:#000;color:#FFFF00;font-size:14px;line-height:16px;white-space:nowrap;overflow:hidden;text-align:center;padding-left:0px;-webkit-text-stroke:0">черн</div><div style="left:96px;top:425px;width:28px;height:16px;background:#FFFFA0;color:#000;font-size:14px;line-height:16px;white-space:nowrap;overflow:hidden;text-align:center;padding-left:0px;-webkit-text-stroke:0">чет</div><div style="left:125px;top:425px;width:56px;height:16px;background:#99FFCC;color:#000;font-size:14px;line-height:16px;white-space:nowrap;overflow:hidden;text-align:center;padding-left:0px;-webkit-text-stroke:0"><span style="display:inline-block;position:static;transform:scaleX(0.85);transform-origin:50% 50%">1-18</span></div><div style="left:182px;top:425px;width:57px;height:16px;background:#33CCFF;color:#000;font-size:13px;line-height:16px;white-space:nowrap;overflow:hidden;text-align:left;padding-left:2px;-webkit-text-stroke:0">1дюжи...</div><div style="left:240px;top:425px;width:76px;height:16px;background:#FFFF00;color:#000;font-size:14px;line-height:16px;white-space:nowrap;overflow:hidden;text-align:center;padding-left:0px;-webkit-text-stroke:0">3колонка</div><div style="left:317px;top:425px;width:76px;height:16px;background:#33CCFF;color:#000;font-size:14px;line-height:16px;white-space:nowrap;overflow:hidden;text-align:center;padding-left:0px;-webkit-text-stroke:0">1сиклайн</div><div style="left:394px;top:425px;width:77px;height:16px;background:#FF9966;color:#000;font-size:13px;line-height:16px;white-space:nowrap;overflow:hidden;text-align:left;padding-left:2px;-webkit-text-stroke:0">Orph</div><div style="left:0px;top:442px;width:28px;height:16px;background:#C0DCC0;color:#000;font-size:14px;line-height:16px;white-space:nowrap;overflow:hidden;text-align:center;padding-left:0px;-webkit-text-stroke:0"><span style="display:inline-block;position:static;transform:scaleX(0.85);transform-origin:50% 50%">22</span></div><div style="left:29px;top:442px;width:24px;height:16px;background:#FFFFA0;color:#000;font-size:14px;line-height:16px;white-space:nowrap;overflow:hidden;text-align:center;padding-left:0px;-webkit-text-stroke:0"><span style="display:inline-block;position:static;transform:scaleX(0.85);transform-origin:50% 50%">17</span></div><div style="left:54px;top:442px;width:41px;height:16px;background:#000;color:#FFFF00;font-size:14px;line-height:16px;white-space:nowrap;overflow:hidden;text-align:center;padding-left:0px;-webkit-text-stroke:0">черн</div><div style="left:96px;top:442px;width:28px;height:16px;background:#66FF33;color:#000;font-size:14px;line-height:16px;white-space:nowrap;overflow:hidden;text-align:center;padding-left:0px;-webkit-text-stroke:0">неч</div><div style="left:125px;top:442px;width:56px;height:16px;background:#99FFCC;color:#000;font-size:14px;line-height:16px;white-space:nowrap;overflow:hidden;text-align:center;padding-left:0px;-webkit-text-stroke:0"><span style="display:inline-block;position:static;transform:scaleX(0.85);transform-origin:50% 50%">1-18</span></div><div style="left:182px;top:442px;width:57px;height:16px;background:#FFFF99;color:#000;font-size:13px;line-height:16px;white-space:nowrap;overflow:hidden;text-align:left;padding-left:2px;-webkit-text-stroke:0">2дюжи...</div><div style="left:240px;top:442px;width:76px;height:16px;background:#00EE00;color:#000;font-size:14px;line-height:16px;white-space:nowrap;overflow:hidden;text-align:center;padding-left:0px;-webkit-text-stroke:0">2колонка</div><div style="left:317px;top:442px;width:76px;height:16px;background:#FF66FF;color:#000;font-size:14px;line-height:16px;white-space:nowrap;overflow:hidden;text-align:center;padding-left:0px;-webkit-text-stroke:0">3сиклайн</div><div style="left:394px;top:442px;width:77px;height:16px;background:#FF9966;color:#000;font-size:13px;line-height:16px;white-space:nowrap;overflow:hidden;text-align:left;padding-left:2px;-webkit-text-stroke:0">Orph</div><div style="left:0px;top:459px;width:28px;height:16px;background:#C0DCC0;color:#000;font-size:14px;line-height:16px;white-space:nowrap;overflow:hidden;text-align:center;padding-left:0px;-webkit-text-stroke:0"><span style="display:inline-block;position:static;transform:scaleX(0.85);transform-origin:50% 50%">21</span></div><div style="left:29px;top:459px;width:24px;height:16px;background:#FFFFA0;color:#000;font-size:14px;line-height:16px;white-space:nowrap;overflow:hidden;text-align:center;padding-left:0px;-webkit-text-stroke:0"><span style="display:inline-block;position:static;transform:scaleX(0.85);transform-origin:50% 50%">8</span></div><div style="left:54px;top:459px;width:41px;height:16px;background:#000;color:#FFFF00;font-size:14px;line-height:16px;white-space:nowrap;overflow:hidden;text-align:center;padding-left:0px;-webkit-text-stroke:0">черн</div><div style="left:96px;top:459px;width:28px;height:16px;background:#FFFFA0;color:#000;font-size:14px;line-height:16px;white-space:nowrap;overflow:hidden;text-align:center;padding-left:0px;-webkit-text-stroke:0">чет</div><div style="left:125px;top:459px;width:56px;height:16px;background:#99FFCC;color:#000;font-size:14px;line-height:16px;white-space:nowrap;overflow:hidden;text-align:center;padding-left:0px;-webkit-text-stroke:0"><span style="display:inline-block;position:static;transform:scaleX(0.85);transform-origin:50% 50%">1-18</span></div><div style="left:182px;top:459px;width:57px;height:16px;background:#33CCFF;color:#000;font-size:13px;line-height:16px;white-space:nowrap;overflow:hidden;text-align:left;padding-left:2px;-webkit-text-stroke:0">1дюжи...</div><div style="left:240px;top:459px;width:76px;height:16px;background:#00EE00;color:#000;font-size:14px;line-height:16px;white-space:nowrap;overflow:hidden;text-align:center;padding-left:0px;-webkit-text-stroke:0">2колонка</div><div style="left:317px;top:459px;width:76px;height:16px;background:#FF6666;color:#000;font-size:14px;line-height:16px;white-space:nowrap;overflow:hidden;text-align:center;padding-left:0px;-webkit-text-stroke:0">2сиклайн</div><div style="left:394px;top:459px;width:77px;height:16px;background:#33CCFF;color:#000;font-size:13px;line-height:16px;white-space:nowrap;overflow:hidden;text-align:left;padding-left:2px;-webkit-text-stroke:0">Tiers</div><div style="left:0px;top:476px;width:28px;height:16px;background:#C0DCC0;color:#000;font-size:14px;line-height:16px;white-space:nowrap;overflow:hidden;text-align:center;padding-left:0px;-webkit-text-stroke:0"><span style="display:inline-block;position:static;transform:scaleX(0.85);transform-origin:50% 50%">20</span></div><div style="left:29px;top:476px;width:24px;height:16px;background:#FFFFA0;color:#000;font-size:14px;line-height:16px;white-space:nowrap;overflow:hidden;text-align:center;padding-left:0px;-webkit-text-stroke:0"><span style="display:inline-block;position:static;transform:scaleX(0.85);transform-origin:50% 50%">5</span></div><div style="left:54px;top:476px;width:41px;height:16px;background:#D0006C;color:#FFFF00;font-size:14px;line-height:16px;white-space:nowrap;overflow:hidden;text-align:center;padding-left:0px;-webkit-text-stroke:0">кра...</div><div style="left:96px;top:476px;width:28px;height:16px;background:#66FF33;color:#000;font-size:14px;line-height:16px;white-space:nowrap;overflow:hidden;text-align:center;padding-left:0px;-webkit-text-stroke:0">неч</div><div style="left:125px;top:476px;width:56px;height:16px;background:#99FFCC;color:#000;font-size:14px;line-height:16px;white-space:nowrap;overflow:hidden;text-align:center;padding-left:0px;-webkit-text-stroke:0"><span style="display:inline-block;position:static;transform:scaleX(0.85);transform-origin:50% 50%">1-18</span></div><div style="left:182px;top:476px;width:57px;height:16px;background:#33CCFF;color:#000;font-size:13px;line-height:16px;white-space:nowrap;overflow:hidden;text-align:left;padding-left:2px;-webkit-text-stroke:0">1дюжи...</div><div style="left:240px;top:476px;width:76px;height:16px;background:#00EE00;color:#000;font-size:14px;line-height:16px;white-space:nowrap;overflow:hidden;text-align:center;padding-left:0px;-webkit-text-stroke:0">2колонка</div><div style="left:317px;top:476px;width:76px;height:16px;background:#33CCFF;color:#000;font-size:14px;line-height:16px;white-space:nowrap;overflow:hidden;text-align:center;padding-left:0px;-webkit-text-stroke:0">1сиклайн</div><div style="left:394px;top:476px;width:77px;height:16px;background:#33CCFF;color:#000;font-size:13px;line-height:16px;white-space:nowrap;overflow:hidden;text-align:left;padding-left:2px;-webkit-text-stroke:0">Tiers</div><div style="left:0px;top:493px;width:28px;height:16px;background:#C0DCC0;color:#000;font-size:14px;line-height:16px;white-space:nowrap;overflow:hidden;text-align:center;padding-left:0px;-webkit-text-stroke:0"><span style="display:inline-block;position:static;transform:scaleX(0.85);transform-origin:50% 50%">19</span></div><div style="left:29px;top:493px;width:24px;height:16px;background:#FFFFA0;color:#000;font-size:14px;line-height:16px;white-space:nowrap;overflow:hidden;text-align:center;padding-left:0px;-webkit-text-stroke:0"><span style="display:inline-block;position:static;transform:scaleX(0.85);transform-origin:50% 50%">26</span></div><div style="left:54px;top:493px;width:41px;height:16px;background:#000;color:#FFFF00;font-size:14px;line-height:16px;white-space:nowrap;overflow:hidden;text-align:center;padding-left:0px;-webkit-text-stroke:0">черн</div><div style="left:96px;top:493px;width:28px;height:16px;background:#FFFFA0;color:#000;font-size:14px;line-height:16px;white-space:nowrap;overflow:hidden;text-align:center;padding-left:0px;-webkit-text-stroke:0">чет</div><div style="left:125px;top:493px;width:56px;height:16px;background:#FF9966;color:#000;font-size:14px;line-height:16px;white-space:nowrap;overflow:hidden;text-align:center;padding-left:0px;-webkit-text-stroke:0"><span style="display:inline-block;position:static;transform:scaleX(0.85);transform-origin:50% 50%">19-36</span></div><div style="left:182px;top:493px;width:57px;height:16px;background:#FF66FF;color:#000;font-size:13px;line-height:16px;white-space:nowrap;overflow:hidden;text-align:left;padding-left:2px;-webkit-text-stroke:0">3дюжи...</div><div style="left:240px;top:493px;width:76px;height:16px;background:#00EE00;color:#000;font-size:14px;line-height:16px;white-space:nowrap;overflow:hidden;text-align:center;padding-left:0px;-webkit-text-stroke:0">2колонка</div><div style="left:317px;top:493px;width:76px;height:16px;background:#FFFF99;color:#000;font-size:14px;line-height:16px;white-space:nowrap;overflow:hidden;text-align:center;padding-left:0px;-webkit-text-stroke:0">5сиклайн</div><div style="left:394px;top:493px;width:77px;height:16px;background:#99FFCC;color:#000;font-size:13px;line-height:16px;white-space:nowrap;overflow:hidden;text-align:left;padding-left:2px;-webkit-text-stroke:0">VdZ_zch</div><div style="left:0px;top:510px;width:28px;height:16px;background:#C0DCC0;color:#000;font-size:14px;line-height:16px;white-space:nowrap;overflow:hidden;text-align:center;padding-left:0px;-webkit-text-stroke:0"><span style="display:inline-block;position:static;transform:scaleX(0.85);transform-origin:50% 50%">18</span></div><div style="left:29px;top:510px;width:24px;height:16px;background:#FFFFA0;color:#000;font-size:14px;line-height:16px;white-space:nowrap;overflow:hidden;text-align:center;padding-left:0px;-webkit-text-stroke:0"><span style="display:inline-block;position:static;transform:scaleX(0.85);transform-origin:50% 50%">21</span></div><div style="left:54px;top:510px;width:41px;height:16px;background:#D0006C;color:#FFFF00;font-size:14px;line-height:16px;white-space:nowrap;overflow:hidden;text-align:center;padding-left:0px;-webkit-text-stroke:0">кра...</div><div style="left:96px;top:510px;width:28px;height:16px;background:#66FF33;color:#000;font-size:14px;line-height:16px;white-space:nowrap;overflow:hidden;text-align:center;padding-left:0px;-webkit-text-stroke:0">неч</div><div style="left:125px;top:510px;width:56px;height:16px;background:#FF9966;color:#000;font-size:14px;line-height:16px;white-space:nowrap;overflow:hidden;text-align:center;padding-left:0px;-webkit-text-stroke:0"><span style="display:inline-block;position:static;transform:scaleX(0.85);transform-origin:50% 50%">19-36</span></div><div style="left:182px;top:510px;width:57px;height:16px;background:#FFFF99;color:#000;font-size:13px;line-height:16px;white-space:nowrap;overflow:hidden;text-align:left;padding-left:2px;-webkit-text-stroke:0">2дюжи...</div><div style="left:240px;top:510px;width:76px;height:16px;background:#FFFF00;color:#000;font-size:14px;line-height:16px;white-space:nowrap;overflow:hidden;text-align:center;padding-left:0px;-webkit-text-stroke:0">3колонка</div><div style="left:317px;top:510px;width:76px;height:16px;background:#99FFCC;color:#000;font-size:14px;line-height:16px;white-space:nowrap;overflow:hidden;text-align:center;padding-left:0px;-webkit-text-stroke:0">4сиклайн</div><div style="left:394px;top:510px;width:77px;height:16px;background:#66FF33;color:#000;font-size:13px;line-height:16px;white-space:nowrap;overflow:hidden;text-align:left;padding-left:2px;-webkit-text-stroke:0">VdZ</div><div style="left:0px;top:527px;width:28px;height:16px;background:#C0DCC0;color:#000;font-size:14px;line-height:16px;white-space:nowrap;overflow:hidden;text-align:center;padding-left:0px;-webkit-text-stroke:0"><span style="display:inline-block;position:static;transform:scaleX(0.85);transform-origin:50% 50%">17</span></div><div style="left:29px;top:527px;width:24px;height:16px;background:#FFFFA0;color:#000;font-size:14px;line-height:16px;white-space:nowrap;overflow:hidden;text-align:center;padding-left:0px;-webkit-text-stroke:0"><span style="display:inline-block;position:static;transform:scaleX(0.85);transform-origin:50% 50%">23</span></div><div style="left:54px;top:527px;width:41px;height:16px;background:#D0006C;color:#FFFF00;font-size:14px;line-height:16px;white-space:nowrap;overflow:hidden;text-align:center;padding-left:0px;-webkit-text-stroke:0">кра...</div><div style="left:96px;top:527px;width:28px;height:16px;background:#FFFFA0;color:#000;font-size:14px;line-height:16px;white-space:nowrap;overflow:hidden;text-align:center;padding-left:0px;-webkit-text-stroke:0">чет</div><div style="left:125px;top:527px;width:56px;height:16px;background:#FF9966;color:#000;font-size:14px;line-height:16px;white-space:nowrap;overflow:hidden;text-align:center;padding-left:0px;-webkit-text-stroke:0"><span style="display:inline-block;position:static;transform:scaleX(0.85);transform-origin:50% 50%">19-36</span></div><div style="left:182px;top:527px;width:57px;height:16px;background:#FF66FF;color:#000;font-size:13px;line-height:16px;white-space:nowrap;overflow:hidden;text-align:left;padding-left:2px;-webkit-text-stroke:0">3дюжи...</div><div style="left:240px;top:527px;width:76px;height:16px;background:#00EE00;color:#000;font-size:14px;line-height:16px;white-space:nowrap;overflow:hidden;text-align:center;padding-left:0px;-webkit-text-stroke:0">2колонка</div><div style="left:317px;top:527px;width:76px;height:16px;background:#66FF33;color:#000;font-size:14px;line-height:16px;white-space:nowrap;overflow:hidden;text-align:center;padding-left:0px;-webkit-text-stroke:0">6сиклайн</div><div style="left:394px;top:527px;width:77px;height:16px;background:#99FFCC;color:#000;font-size:13px;line-height:16px;white-space:nowrap;overflow:hidden;text-align:left;padding-left:2px;-webkit-text-stroke:0">VdZ_zch</div></div><div style="left:480px;top:146px;width:17px;height:533px;"><div style="left:0px;top:0px;width:17px;height:533px;background:linear-gradient(90deg,#F3F1EC,#FEFEFB);"></div><div style="left:1px;top:0px;width:15px;height:16px;border:1px solid #B7CAF5;border-radius:2px;background:linear-gradient(90deg,#C8D8FB,#B9CCF8 60%,#ADC3F5);"><svg style="position:absolute;left:2px;top:4px;overflow:visible" width="11" height="8" viewBox="0 0 11 8"><path d="M2 6 L5.5 2.5 L9 6" fill="none" stroke="#4D6185" stroke-width="2"/></svg></div><div style="left:1px;top:517px;width:15px;height:16px;border:1px solid #B7CAF5;border-radius:2px;background:linear-gradient(90deg,#C8D8FB,#B9CCF8 60%,#ADC3F5);"><svg style="position:absolute;left:2px;top:4px;overflow:visible" width="11" height="8" viewBox="0 0 11 8"><path d="M2 2.5 L5.5 6 L9 2.5" fill="none" stroke="#4D6185" stroke-width="2"/></svg></div><div style="left:1px;top:56px;width:15px;height:300px;border:1px solid #B5C8F4;border-radius:2px;background:linear-gradient(90deg,#CCDAFC,#BDD0FA 60%,#B2C6F6);"><div style="left:3px;top:145px;width:8px;height:8px;background:repeating-linear-gradient(180deg,#E6EEFF 0 1px,#8CA8E6 1px 2px);"></div></div></div>
<div style="left:42px;top:685px;width:33px;height:33px;background:#0E5A12;"><svg style="position:absolute;left:5px;top:6px;overflow:visible" width="23" height="21" viewBox="0 0 23 21"><ellipse cx="11.5" cy="10.5" rx="10.5" ry="9.5" fill="#DC3422"/></svg><div class="ct" style="left:0px;top:0px;width:33px;height:33px;color:#fff;font-size:11.5px;font-family:'Liberation Mono',monospace;letter-spacing:-0.3px;-webkit-text-stroke:0.2px #fff;padding-bottom:2px;"><span>3</span></div></div><div style="left:42px;top:720px;width:33px;height:33px;background:#0E5A12;"><svg style="position:absolute;left:5px;top:6px;overflow:visible" width="23" height="21" viewBox="0 0 23 21"><ellipse cx="11.5" cy="10.5" rx="10.5" ry="9.5" fill="#000"/></svg><div class="ct" style="left:0px;top:0px;width:33px;height:33px;color:#fff;font-size:11.5px;font-family:'Liberation Mono',monospace;letter-spacing:-0.3px;-webkit-text-stroke:0.2px #fff;padding-bottom:2px;"><span>2</span></div></div><div style="left:42px;top:755px;width:33px;height:33px;background:#0E5A12;"><svg style="position:absolute;left:5px;top:6px;overflow:visible" width="23" height="21" viewBox="0 0 23 21"><ellipse cx="11.5" cy="10.5" rx="10.5" ry="9.5" fill="#DC3422"/></svg><div class="ct" style="left:0px;top:0px;width:33px;height:33px;color:#fff;font-size:11.5px;font-family:'Liberation Mono',monospace;letter-spacing:-0.3px;-webkit-text-stroke:0.2px #fff;padding-bottom:2px;"><span>1</span></div></div><div style="left:77px;top:685px;width:33px;height:33px;background:#0E5A12;"><svg style="position:absolute;left:5px;top:6px;overflow:visible" width="23" height="21" viewBox="0 0 23 21"><ellipse cx="11.5" cy="10.5" rx="10.5" ry="9.5" fill="#000"/></svg><div class="ct" style="left:0px;top:0px;width:33px;height:33px;color:#fff;font-size:11.5px;font-family:'Liberation Mono',monospace;letter-spacing:-0.3px;-webkit-text-stroke:0.2px #fff;padding-bottom:2px;"><span>6</span></div></div><div style="left:77px;top:720px;width:33px;height:33px;background:#0E5A12;"><svg style="position:absolute;left:5px;top:6px;overflow:visible" width="23" height="21" viewBox="0 0 23 21"><ellipse cx="11.5" cy="10.5" rx="10.5" ry="9.5" fill="#DC3422"/></svg><div class="ct" style="left:0px;top:0px;width:33px;height:33px;color:#fff;font-size:11.5px;font-family:'Liberation Mono',monospace;letter-spacing:-0.3px;-webkit-text-stroke:0.2px #fff;padding-bottom:2px;"><span>5</span></div></div><div style="left:77px;top:755px;width:33px;height:33px;background:#0E5A12;"><svg style="position:absolute;left:5px;top:6px;overflow:visible" width="23" height="21" viewBox="0 0 23 21"><ellipse cx="11.5" cy="10.5" rx="10.5" ry="9.5" fill="#000"/></svg><div class="ct" style="left:0px;top:0px;width:33px;height:33px;color:#fff;font-size:11.5px;font-family:'Liberation Mono',monospace;letter-spacing:-0.3px;-webkit-text-stroke:0.2px #fff;padding-bottom:2px;"><span>4</span></div></div><div style="left:112px;top:685px;width:33px;height:33px;background:#0E5A12;"><svg style="position:absolute;left:5px;top:6px;overflow:visible" width="23" height="21" viewBox="0 0 23 21"><ellipse cx="11.5" cy="10.5" rx="10.5" ry="9.5" fill="#DC3422"/></svg><div class="ct" style="left:0px;top:0px;width:33px;height:33px;color:#fff;font-size:11.5px;font-family:'Liberation Mono',monospace;letter-spacing:-0.3px;-webkit-text-stroke:0.2px #fff;padding-bottom:2px;"><span>9</span></div></div><div style="left:112px;top:720px;width:33px;height:33px;background:#0E5A12;"><svg style="position:absolute;left:5px;top:6px;overflow:visible" width="23" height="21" viewBox="0 0 23 21"><ellipse cx="11.5" cy="10.5" rx="10.5" ry="9.5" fill="#000"/></svg><div class="ct" style="left:0px;top:0px;width:33px;height:33px;color:#fff;font-size:11.5px;font-family:'Liberation Mono',monospace;letter-spacing:-0.3px;-webkit-text-stroke:0.2px #fff;padding-bottom:2px;"><span>8</span></div></div><div style="left:112px;top:755px;width:33px;height:33px;background:#0E5A12;"><svg style="position:absolute;left:5px;top:6px;overflow:visible" width="23" height="21" viewBox="0 0 23 21"><ellipse cx="11.5" cy="10.5" rx="10.5" ry="9.5" fill="#DC3422"/></svg><div class="ct" style="left:0px;top:0px;width:33px;height:33px;color:#fff;font-size:11.5px;font-family:'Liberation Mono',monospace;letter-spacing:-0.3px;-webkit-text-stroke:0.2px #fff;padding-bottom:2px;"><span>7</span></div></div><div style="left:147px;top:685px;width:33px;height:33px;background:#0E5A12;"><svg style="position:absolute;left:5px;top:6px;overflow:visible" width="23" height="21" viewBox="0 0 23 21"><ellipse cx="11.5" cy="10.5" rx="10.5" ry="9.5" fill="#DC3422"/></svg><div class="ct" style="left:0px;top:0px;width:33px;height:33px;color:#fff;font-size:11.5px;font-family:'Liberation Mono',monospace;letter-spacing:-0.3px;-webkit-text-stroke:0.2px #fff;padding-bottom:2px;"><span>12</span></div></div><div style="left:147px;top:720px;width:33px;height:33px;background:#0E5A12;"><svg style="position:absolute;left:5px;top:6px;overflow:visible" width="23" height="21" viewBox="0 0 23 21"><ellipse cx="11.5" cy="10.5" rx="10.5" ry="9.5" fill="#000"/></svg><div class="ct" style="left:0px;top:0px;width:33px;height:33px;color:#fff;font-size:11.5px;font-family:'Liberation Mono',monospace;letter-spacing:-0.3px;-webkit-text-stroke:0.2px #fff;padding-bottom:2px;"><span>11</span></div></div><div style="left:147px;top:755px;width:33px;height:33px;background:#0E5A12;"><svg style="position:absolute;left:5px;top:6px;overflow:visible" width="23" height="21" viewBox="0 0 23 21"><ellipse cx="11.5" cy="10.5" rx="10.5" ry="9.5" fill="#000"/></svg><div class="ct" style="left:0px;top:0px;width:33px;height:33px;color:#fff;font-size:11.5px;font-family:'Liberation Mono',monospace;letter-spacing:-0.3px;-webkit-text-stroke:0.2px #fff;padding-bottom:2px;"><span>10</span></div></div><div style="left:182px;top:685px;width:33px;height:33px;background:#0E5A12;"><svg style="position:absolute;left:5px;top:6px;overflow:visible" width="23" height="21" viewBox="0 0 23 21"><ellipse cx="11.5" cy="10.5" rx="10.5" ry="9.5" fill="#000"/></svg><div class="ct" style="left:0px;top:0px;width:33px;height:33px;color:#fff;font-size:11.5px;font-family:'Liberation Mono',monospace;letter-spacing:-0.3px;-webkit-text-stroke:0.2px #fff;padding-bottom:2px;"><span>15</span></div></div><div style="left:182px;top:720px;width:33px;height:33px;background:#0E5A12;"><svg style="position:absolute;left:5px;top:6px;overflow:visible" width="23" height="21" viewBox="0 0 23 21"><ellipse cx="11.5" cy="10.5" rx="10.5" ry="9.5" fill="#DC3422"/></svg><div class="ct" style="left:0px;top:0px;width:33px;height:33px;color:#fff;font-size:11.5px;font-family:'Liberation Mono',monospace;letter-spacing:-0.3px;-webkit-text-stroke:0.2px #fff;padding-bottom:2px;"><span>14</span></div></div><div style="left:182px;top:755px;width:33px;height:33px;background:#0E5A12;"><svg style="position:absolute;left:5px;top:6px;overflow:visible" width="23" height="21" viewBox="0 0 23 21"><ellipse cx="11.5" cy="10.5" rx="10.5" ry="9.5" fill="#000"/></svg><div class="ct" style="left:0px;top:0px;width:33px;height:33px;color:#fff;font-size:11.5px;font-family:'Liberation Mono',monospace;letter-spacing:-0.3px;-webkit-text-stroke:0.2px #fff;padding-bottom:2px;"><span>13</span></div></div><div style="left:217px;top:685px;width:33px;height:33px;background:#0E5A12;"><svg style="position:absolute;left:5px;top:6px;overflow:visible" width="23" height="21" viewBox="0 0 23 21"><ellipse cx="11.5" cy="10.5" rx="10.5" ry="9.5" fill="#DC3422"/></svg><div class="ct" style="left:0px;top:0px;width:33px;height:33px;color:#fff;font-size:11.5px;font-family:'Liberation Mono',monospace;letter-spacing:-0.3px;-webkit-text-stroke:0.2px #fff;padding-bottom:2px;"><span>18</span></div></div><div style="left:217px;top:720px;width:33px;height:33px;background:#0E5A12;"><svg style="position:absolute;left:5px;top:6px;overflow:visible" width="23" height="21" viewBox="0 0 23 21"><ellipse cx="11.5" cy="10.5" rx="10.5" ry="9.5" fill="#000"/></svg><div class="ct" style="left:0px;top:0px;width:33px;height:33px;color:#fff;font-size:11.5px;font-family:'Liberation Mono',monospace;letter-spacing:-0.3px;-webkit-text-stroke:0.2px #fff;padding-bottom:2px;"><span>17</span></div></div><div style="left:217px;top:755px;width:33px;height:33px;background:#0E5A12;"><svg style="position:absolute;left:5px;top:6px;overflow:visible" width="23" height="21" viewBox="0 0 23 21"><ellipse cx="11.5" cy="10.5" rx="10.5" ry="9.5" fill="#DC3422"/></svg><div class="ct" style="left:0px;top:0px;width:33px;height:33px;color:#fff;font-size:11.5px;font-family:'Liberation Mono',monospace;letter-spacing:-0.3px;-webkit-text-stroke:0.2px #fff;padding-bottom:2px;"><span>16</span></div></div><div style="left:252px;top:685px;width:33px;height:33px;background:#0E5A12;"><svg style="position:absolute;left:5px;top:6px;overflow:visible" width="23" height="21" viewBox="0 0 23 21"><ellipse cx="11.5" cy="10.5" rx="10.5" ry="9.5" fill="#DC3422"/></svg><div class="ct" style="left:0px;top:0px;width:33px;height:33px;color:#fff;font-size:11.5px;font-family:'Liberation Mono',monospace;letter-spacing:-0.3px;-webkit-text-stroke:0.2px #fff;padding-bottom:2px;"><span>21</span></div></div><div style="left:252px;top:720px;width:33px;height:33px;background:#0E5A12;"><svg style="position:absolute;left:5px;top:6px;overflow:visible" width="23" height="21" viewBox="0 0 23 21"><ellipse cx="11.5" cy="10.5" rx="10.5" ry="9.5" fill="#000"/></svg><div class="ct" style="left:0px;top:0px;width:33px;height:33px;color:#fff;font-size:11.5px;font-family:'Liberation Mono',monospace;letter-spacing:-0.3px;-webkit-text-stroke:0.2px #fff;padding-bottom:2px;"><span>20</span></div></div><div style="left:252px;top:755px;width:33px;height:33px;background:#0E5A12;"><svg style="position:absolute;left:5px;top:6px;overflow:visible" width="23" height="21" viewBox="0 0 23 21"><ellipse cx="11.5" cy="10.5" rx="10.5" ry="9.5" fill="#DC3422"/></svg><div class="ct" style="left:0px;top:0px;width:33px;height:33px;color:#fff;font-size:11.5px;font-family:'Liberation Mono',monospace;letter-spacing:-0.3px;-webkit-text-stroke:0.2px #fff;padding-bottom:2px;"><span>19</span></div></div><div style="left:287px;top:685px;width:33px;height:33px;background:#0E5A12;"><svg style="position:absolute;left:5px;top:6px;overflow:visible" width="23" height="21" viewBox="0 0 23 21"><ellipse cx="11.5" cy="10.5" rx="10.5" ry="9.5" fill="#000"/></svg><div class="ct" style="left:0px;top:0px;width:33px;height:33px;color:#fff;font-size:11.5px;font-family:'Liberation Mono',monospace;letter-spacing:-0.3px;-webkit-text-stroke:0.2px #fff;padding-bottom:2px;"><span>24</span></div></div><div style="left:287px;top:720px;width:33px;height:33px;background:#0E5A12;"><svg style="position:absolute;left:5px;top:6px;overflow:visible" width="23" height="21" viewBox="0 0 23 21"><ellipse cx="11.5" cy="10.5" rx="10.5" ry="9.5" fill="#DC3422"/></svg><div class="ct" style="left:0px;top:0px;width:33px;height:33px;color:#fff;font-size:11.5px;font-family:'Liberation Mono',monospace;letter-spacing:-0.3px;-webkit-text-stroke:0.2px #fff;padding-bottom:2px;"><span>23</span></div></div><div style="left:287px;top:755px;width:33px;height:33px;background:#0E5A12;"><svg style="position:absolute;left:5px;top:6px;overflow:visible" width="23" height="21" viewBox="0 0 23 21"><ellipse cx="11.5" cy="10.5" rx="10.5" ry="9.5" fill="#000"/></svg><div class="ct" style="left:0px;top:0px;width:33px;height:33px;color:#fff;font-size:11.5px;font-family:'Liberation Mono',monospace;letter-spacing:-0.3px;-webkit-text-stroke:0.2px #fff;padding-bottom:2px;"><span>22</span></div></div><div style="left:322px;top:685px;width:33px;height:33px;background:#0E5A12;"><svg style="position:absolute;left:5px;top:6px;overflow:visible" width="23" height="21" viewBox="0 0 23 21"><ellipse cx="11.5" cy="10.5" rx="10.5" ry="9.5" fill="#DC3422"/></svg><div class="ct" style="left:0px;top:0px;width:33px;height:33px;color:#fff;font-size:11.5px;font-family:'Liberation Mono',monospace;letter-spacing:-0.3px;-webkit-text-stroke:0.2px #fff;padding-bottom:2px;"><span>27</span></div></div><div style="left:322px;top:720px;width:33px;height:33px;background:#0E5A12;"><svg style="position:absolute;left:5px;top:6px;overflow:visible" width="23" height="21" viewBox="0 0 23 21"><ellipse cx="11.5" cy="10.5" rx="10.5" ry="9.5" fill="#000"/></svg><div class="ct" style="left:0px;top:0px;width:33px;height:33px;color:#fff;font-size:11.5px;font-family:'Liberation Mono',monospace;letter-spacing:-0.3px;-webkit-text-stroke:0.2px #fff;padding-bottom:2px;"><span>26</span></div></div><div style="left:322px;top:755px;width:33px;height:33px;background:#0E5A12;"><svg style="position:absolute;left:5px;top:6px;overflow:visible" width="23" height="21" viewBox="0 0 23 21"><ellipse cx="11.5" cy="10.5" rx="10.5" ry="9.5" fill="#DC3422"/></svg><div class="ct" style="left:0px;top:0px;width:33px;height:33px;color:#fff;font-size:11.5px;font-family:'Liberation Mono',monospace;letter-spacing:-0.3px;-webkit-text-stroke:0.2px #fff;padding-bottom:2px;"><span>25</span></div></div><div style="left:357px;top:685px;width:33px;height:33px;background:#0E5A12;"><svg style="position:absolute;left:5px;top:6px;overflow:visible" width="23" height="21" viewBox="0 0 23 21"><ellipse cx="11.5" cy="10.5" rx="10.5" ry="9.5" fill="#DC3422"/></svg><div class="ct" style="left:0px;top:0px;width:33px;height:33px;color:#fff;font-size:11.5px;font-family:'Liberation Mono',monospace;letter-spacing:-0.3px;-webkit-text-stroke:0.2px #fff;padding-bottom:2px;"><span>30</span></div></div><div style="left:357px;top:720px;width:33px;height:33px;background:#0E5A12;"><svg style="position:absolute;left:5px;top:6px;overflow:visible" width="23" height="21" viewBox="0 0 23 21"><ellipse cx="11.5" cy="10.5" rx="10.5" ry="9.5" fill="#000"/></svg><div class="ct" style="left:0px;top:0px;width:33px;height:33px;color:#fff;font-size:11.5px;font-family:'Liberation Mono',monospace;letter-spacing:-0.3px;-webkit-text-stroke:0.2px #fff;padding-bottom:2px;"><span>29</span></div></div><div style="left:357px;top:755px;width:33px;height:33px;background:#0E5A12;"><svg style="position:absolute;left:5px;top:6px;overflow:visible" width="23" height="21" viewBox="0 0 23 21"><ellipse cx="11.5" cy="10.5" rx="10.5" ry="9.5" fill="#000"/></svg><div class="ct" style="left:0px;top:0px;width:33px;height:33px;color:#fff;font-size:11.5px;font-family:'Liberation Mono',monospace;letter-spacing:-0.3px;-webkit-text-stroke:0.2px #fff;padding-bottom:2px;"><span>28</span></div></div><div style="left:392px;top:685px;width:33px;height:33px;background:#0E5A12;"><svg style="position:absolute;left:5px;top:6px;overflow:visible" width="23" height="21" viewBox="0 0 23 21"><ellipse cx="11.5" cy="10.5" rx="10.5" ry="9.5" fill="#000"/></svg><div class="ct" style="left:0px;top:0px;width:33px;height:33px;color:#fff;font-size:11.5px;font-family:'Liberation Mono',monospace;letter-spacing:-0.3px;-webkit-text-stroke:0.2px #fff;padding-bottom:2px;"><span>33</span></div></div><div style="left:392px;top:720px;width:33px;height:33px;background:#0E5A12;"><svg style="position:absolute;left:5px;top:6px;overflow:visible" width="23" height="21" viewBox="0 0 23 21"><ellipse cx="11.5" cy="10.5" rx="10.5" ry="9.5" fill="#DC3422"/></svg><div class="ct" style="left:0px;top:0px;width:33px;height:33px;color:#fff;font-size:11.5px;font-family:'Liberation Mono',monospace;letter-spacing:-0.3px;-webkit-text-stroke:0.2px #fff;padding-bottom:2px;"><span>32</span></div></div><div style="left:392px;top:755px;width:33px;height:33px;background:#0E5A12;"><svg style="position:absolute;left:5px;top:6px;overflow:visible" width="23" height="21" viewBox="0 0 23 21"><ellipse cx="11.5" cy="10.5" rx="10.5" ry="9.5" fill="#000"/></svg><div class="ct" style="left:0px;top:0px;width:33px;height:33px;color:#fff;font-size:11.5px;font-family:'Liberation Mono',monospace;letter-spacing:-0.3px;-webkit-text-stroke:0.2px #fff;padding-bottom:2px;"><span>31</span></div></div><div style="left:427px;top:685px;width:33px;height:33px;background:#0E5A12;"><svg style="position:absolute;left:5px;top:6px;overflow:visible" width="23" height="21" viewBox="0 0 23 21"><ellipse cx="11.5" cy="10.5" rx="10.5" ry="9.5" fill="#DC3422"/></svg><div class="ct" style="left:0px;top:0px;width:33px;height:33px;color:#fff;font-size:11.5px;font-family:'Liberation Mono',monospace;letter-spacing:-0.3px;-webkit-text-stroke:0.2px #fff;padding-bottom:2px;"><span>36</span></div></div><div style="left:427px;top:720px;width:33px;height:33px;background:#0E5A12;"><svg style="position:absolute;left:5px;top:6px;overflow:visible" width="23" height="21" viewBox="0 0 23 21"><ellipse cx="11.5" cy="10.5" rx="10.5" ry="9.5" fill="#000"/></svg><div class="ct" style="left:0px;top:0px;width:33px;height:33px;color:#fff;font-size:11.5px;font-family:'Liberation Mono',monospace;letter-spacing:-0.3px;-webkit-text-stroke:0.2px #fff;padding-bottom:2px;"><span>35</span></div></div><div style="left:427px;top:755px;width:33px;height:33px;background:#0E5A12;"><svg style="position:absolute;left:5px;top:6px;overflow:visible" width="23" height="21" viewBox="0 0 23 21"><ellipse cx="11.5" cy="10.5" rx="10.5" ry="9.5" fill="#DC3422"/></svg><div class="ct" style="left:0px;top:0px;width:33px;height:33px;color:#fff;font-size:11.5px;font-family:'Liberation Mono',monospace;letter-spacing:-0.3px;-webkit-text-stroke:0.2px #fff;padding-bottom:2px;"><span>34</span></div></div><div style="left:7px;top:720px;width:33px;height:33px;background:#0E5A12;"><svg style="position:absolute;left:2px;top:4px;overflow:visible" width="29" height="25" viewBox="0 0 29 25"><ellipse cx="14.5" cy="12.5" rx="13" ry="11" fill="none" stroke="#8CDC6C" stroke-width="1" stroke-dasharray="3 1"/></svg><div class="ct" style="left:0px;top:0px;width:33px;height:33px;color:#E8F4E0;font-size:21px;transform:scaleX(0.72);-webkit-text-stroke:0.3px #405040;"><span>0</span></div></div><div style="left:6px;top:680px;width:491px;height:1px;background:#D8D2BD;"></div><div style="left:4px;top:796px;width:1127px;height:1px;background:#B5B1A0;"></div><div style="left:4px;top:797px;width:1127px;height:2px;background:#9D9A8A;"></div><div class="t" style="left:5px;top:808px;font-size:11px;letter-spacing:-0.13px;">В последнем спине выпало: 33 черное</div><div style="left:702px;top:800px;width:1px;height:25px;background:#ACA899;"></div><div style="left:703px;top:800px;width:1px;height:25px;background:#fff;"></div><div style="left:822px;top:800px;width:1px;height:25px;background:#ACA899;"></div><div style="left:823px;top:800px;width:1px;height:25px;background:#fff;"></div><div class="t" style="left:708px;top:808px;font-size:11px;">Автосмещение : 6</div><div class="t" style="left:828px;top:808px;font-size:11px;">Исходное: 13</div><svg style="position:absolute;left:1116px;top:812px;overflow:visible" width="13" height="13" viewBox="0 0 13 13"><rect x="9" y="1" width="2" height="2" fill="#BDB9A8"/><rect x="6" y="4" width="2" height="2" fill="#BDB9A8"/><rect x="9" y="4" width="2" height="2" fill="#BDB9A8"/><rect x="3" y="7" width="2" height="2" fill="#BDB9A8"/><rect x="6" y="7" width="2" height="2" fill="#BDB9A8"/><rect x="9" y="7" width="2" height="2" fill="#BDB9A8"/><rect x="0" y="10" width="2" height="2" fill="#BDB9A8"/><rect x="3" y="10" width="2" height="2" fill="#BDB9A8"/><rect x="6" y="10" width="2" height="2" fill="#BDB9A8"/><rect x="9" y="10" width="2" height="2" fill="#BDB9A8"/></svg>
<div class="t" style="left:506px;top:33px;font-size:11px;letter-spacing:-0.08px;">Ряд Фибоначчи=1 1 2 3 5 8 13 21 34 55 89 144 233 377 610</div><div class="t" style="left:506px;top:49px;font-size:11px;letter-spacing:-0.08px;">Ряд Tiers = 5 8 10 11 13 16 23 24 27 30 33 36</div><div class="t" style="left:506px;top:65px;font-size:11px;letter-spacing:-0.08px;">Ряд VdZ = 0 2 3 4 7 12 15 18 19 21 22 25 26 28 29 32 35</div><div class="t" style="left:822px;top:33px;font-size:11px;letter-spacing:-0.08px;">Ряд Мартингейл=1 2 4 8 16 32 64 128 256 512</div><div class="t" style="left:822px;top:49px;font-size:11px;letter-spacing:-0.08px;">Ряд Orph = 1 6 9 14 17 20 31 34</div><div class="t" style="left:822px;top:65px;font-size:11px;letter-spacing:-0.08px;">Ряд VdZ_zch = 0 3 12 15 26 32 35</div><div class="t" style="left:506px;top:82px;font-size:17px;font-weight:bold;line-height:20px;letter-spacing:0.15px;-webkit-text-stroke:0;">Сумма на счете = 0</div><div style="left:505px;top:103px;width:171px;height:21px;background:#fff;border:1px solid #7F9DB9;"><div class="t" style="left:3px;top:4px;font-size:11px;">Автоставки</div></div><div style="left:659px;top:106px;width:14px;height:15px;border-radius:2px;background:linear-gradient(180deg,#C6D5FB,#B4C8F6 50%,#A6BDF4);border:1px solid #B9CCF6;"><svg style="position:absolute;left:2px;top:4px;overflow:visible" width="9" height="6" viewBox="0 0 9 6"><path d="M1 1 L4.5 4.5 L8 1" fill="none" stroke="#4D6185" stroke-width="2"/></svg></div><div style="left:686px;top:79px;width:281px;height:41px;border:1px solid;border-color:#ACA899 #fff #fff #ACA899;"></div><div class="btn" style="left:695px;top:86px;width:87px;height:25px;"><div class="ct" style="left:0px;top:0px;width:85px;height:23px;font-size:11px;"><span>Автоспин старт</span></div></div><div class="t" style="left:798px;top:88px;font-size:11px;">Временная</div><div class="t" style="left:798px;top:101px;font-size:11px;">задержка, мс</div><div style="left:885px;top:84px;width:73px;height:32px;background:#fff;border:1px solid #7F9DB9;"><div class="t" style="left:3px;top:4px;font-size:19px;line-height:22px;-webkit-text-stroke:0;">0</div></div><div style="left:938px;top:85px;width:19px;height:15px;border:1px solid #1C3A6E;border-radius:2px;background:linear-gradient(180deg,#FFFFFF,#E6E4DA);"><svg style="position:absolute;left:3px;top:3px;overflow:visible" width="13" height="8" viewBox="0 0 13 8"><path d="M3 5.5 L6.5 2 L10 5.5 Z" fill="#000"/></svg></div><div style="left:938px;top:100px;width:19px;height:15px;border:1px solid #1C3A6E;border-radius:2px;background:linear-gradient(180deg,#FFFFFF,#E6E4DA);"><svg style="position:absolute;left:3px;top:3px;overflow:visible" width="13" height="8" viewBox="0 0 13 8"><path d="M3 2 L6.5 5.5 L10 2 Z" fill="#000"/></svg></div><div style="left:503px;top:134px;width:626px;height:1px;background:#ACA899;"></div><div style="left:503px;top:135px;width:626px;height:1px;background:#fff;"></div>
<div style="left:503px;top:162px;width:624px;height:472px;background:linear-gradient(180deg,#FCFCFE 0%,#F7F6F2 60%,#F2F1EB 100%);border:1px solid #919B9C;"></div><div style="left:505px;top:144px;width:117px;height:18px;background:linear-gradient(180deg,#FFFFFF 0%,#FAFAF8 50%,#EFEEE9 100%);border:1px solid #919B9C;border-bottom:none;border-radius:3px 3px 0 0;"><div class="ct" style="left:0px;top:0px;width:115px;height:18px;font-size:11px;padding-top:1px;"><span>Контроль банкролла</span></div></div><div style="left:622px;top:144px;width:110px;height:18px;background:linear-gradient(180deg,#FFFFFF 0%,#FAFAF8 50%,#EFEEE9 100%);border:1px solid #919B9C;border-bottom:none;border-radius:3px 3px 0 0;"><div class="ct" style="left:0px;top:0px;width:108px;height:18px;font-size:11px;padding-top:1px;"><span>Частоты по числам</span></div></div><div style="left:733px;top:144px;width:130px;height:18px;background:linear-gradient(180deg,#FFFFFF 0%,#FAFAF8 50%,#EFEEE9 100%);border:1px solid #919B9C;border-bottom:none;border-radius:3px 3px 0 0;"><div class="ct" style="left:0px;top:0px;width:128px;height:18px;font-size:11px;padding-top:1px;"><span>Функционал PsevdoMS</span></div></div><div style="left:937px;top:144px;width:152px;height:18px;background:linear-gradient(180deg,#FFFFFF 0%,#FAFAF8 50%,#EFEEE9 100%);border:1px solid #919B9C;border-bottom:none;border-radius:3px 3px 0 0;"><div class="ct" style="left:0px;top:0px;width:150px;height:18px;font-size:11px;padding-top:1px;"><span>Деление колеса на сектора</span></div></div><div style="left:1090px;top:144px;width:10px;height:18px;background:linear-gradient(180deg,#FFFFFF 0%,#FAFAF8 50%,#EFEEE9 100%);border:1px solid #919B9C;border-bottom:none;border-radius:3px 3px 0 0;"><div class="ct" style="left:0px;top:0px;width:8px;height:18px;font-size:11px;padding-top:1px;"><span></span></div></div><div style="left:862px;top:142px;width:75px;height:21px;background:#FCFCFE;border:1px solid #919B9C;border-bottom:none;border-radius:3px 3px 0 0;z-index:2;"><div style="left:-1px;top:-1px;width:75px;height:3px;background:#FFC83C;border-radius:3px 3px 0 0;border-top:1px solid #E68B2C;"></div><div class="ct" style="left:0px;top:0px;width:73px;height:20px;font-size:11px;padding-bottom:1px;"><span>Автоставки</span></div></div><div style="left:1096px;top:144px;width:32px;height:15px;border-radius:2px;background:linear-gradient(180deg,#C8D8FA,#B5CAF6);"><svg style="position:absolute;left:5px;top:3px;overflow:visible" width="24" height="10" viewBox="0 0 24 10"><path d="M5 1 L1 5 L5 9 Z" fill="#4D6185"/><path d="M19 1 L23 5 L19 9 Z" fill="#4D6185"/></svg></div><div style="left:508px;top:187px;width:612px;height:442px;background:linear-gradient(180deg,#FCFCFE 0%,#F7F6F2 60%,#F2F1EB 100%);border:1px solid #919B9C;background:#FBFBFA;border-top:none;border-right:none;"></div><div style="left:508px;top:187px;width:587px;height:1px;background:#919B9C;"></div><div style="left:1119px;top:190px;width:1px;height:439px;background:#919B9C;"></div><div style="left:509px;top:631px;width:616px;height:1px;background:#D8D4C4;"></div><div style="left:1124px;top:164px;width:1px;height:468px;background:#D8D4C4;"></div><div style="left:503px;top:636px;width:627px;height:1px;background:#CFCBB8;"></div><div style="left:503px;top:637px;width:627px;height:1px;background:#FFFFFF;"></div><div style="left:510px;top:169px;width:84px;height:18px;background:linear-gradient(180deg,#FFFFFF 0%,#FAFAF8 50%,#EFEEE9 100%);border:1px solid #919B9C;border-bottom:none;border-radius:3px 3px 0 0;"><div class="ct" style="left:0px;top:0px;width:82px;height:18px;font-size:11px;padding-top:1px;"><span>Общие ставки</span></div></div><div style="left:784px;top:169px;width:124px;height:18px;background:linear-gradient(180deg,#FFFFFF 0%,#FAFAF8 50%,#EFEEE9 100%);border:1px solid #919B9C;border-bottom:none;border-radius:3px 3px 0 0;"><div class="ct" style="left:0px;top:0px;width:122px;height:18px;font-size:11px;padding-top:1px;"><span>Исходные строки МД5</span></div></div><div style="left:593px;top:167px;width:191px;height:21px;background:#FCFCFE;border:1px solid #919B9C;border-bottom:none;border-radius:3px 3px 0 0;z-index:2;"><div style="left:-1px;top:-1px;width:191px;height:3px;background:#FFC83C;border-radius:3px 3px 0 0;border-top:1px solid #E68B2C;"></div><div class="ct" style="left:0px;top:0px;width:189px;height:20px;font-size:11px;padding-bottom:1px;"><span>Наборы пользовательских ставок</span></div></div><div class="btn" style="left:520px;top:197px;width:160px;height:34px;"><svg style="position:absolute;left:4px;top:6px;overflow:visible" width="20" height="20" viewBox="0 0 20 20"><circle cx="10" cy="10" r="8.2" fill="#22DD55" stroke="#000" stroke-width="2.2"/><text x="10" y="13.5" font-family="Liberation Sans" font-size="9" text-anchor="middle" fill="#000" font-weight="bold" letter-spacing="-0.5">ПН</text></svg><div class="ct" style="left:22px;top:0px;width:136px;height:32px;flex-direction:column;font-size:11px;line-height:13px;"><span>Автоставка</span><span>пользовательский набор</span></div></div><div class="btn" style="left:688px;top:197px;width:120px;height:34px;"><div class="icsq" style="left:5px;top:5px;width:24px;height:21px;"></div><svg style="position:absolute;left:7px;top:6px;overflow:visible" width="20" height="19" viewBox="0 0 20 19"><defs><linearGradient id="fg2" x1="0" y1="0" x2="0" y2="1"><stop offset="0" stop-color="#FFF4A0"/><stop offset="1" stop-color="#E8A820"/></linearGradient></defs><path d="M3.5 5 L8 5 L9.5 7 L14.5 7 L14.5 9 L6 9 L4 16.5 L3.5 16.5 Z" fill="#F2D870" stroke="#A08040" stroke-width="0.8"/><path d="M6 9.5 L19 9.5 L16 16.8 L3.6 16.8 Z" fill="url(#fg2)" stroke="#8A6A20" stroke-width="0.8"/><path d="M3.6 16.8 L16 16.8" stroke="#202020" stroke-width="1.2"/><path d="M11 4.5 Q14 1.5 17.5 4" fill="none" stroke="#4A5A80" stroke-width="1.1"/><path d="M16 2.5 L19 5.5 L19 2 Z" fill="#3A4A70"/></svg><div class="ct" style="left:28px;top:0px;width:90px;height:32px;flex-direction:column;font-size:11px;line-height:13px;"><span>Загрузить файл</span><span>набора ставок</span></div></div><div class="btn" style="left:817px;top:197px;width:183px;height:34px;"><div class="icsq" style="left:4px;top:5px;width:19px;height:21px;"></div><svg style="position:absolute;left:4px;top:6px;overflow:visible" width="20" height="19" viewBox="0 0 20 19"><defs><linearGradient id="flg2" x1="0" y1="0" x2="1" y2="1"><stop offset="0" stop-color="#8A80F0"/><stop offset="1" stop-color="#3A2AA0"/></linearGradient></defs><rect x="3" y="3" width="14" height="14" fill="url(#flg2)" stroke="#2A2080" stroke-width="0.6"/><rect x="5" y="3.6" width="9" height="6.4" fill="#F0F0FA" stroke="#4A40B0" stroke-width="0.6"/><rect x="6.5" y="12.5" width="6" height="4.5" fill="#ECECF8"/><rect x="7" y="13" width="2" height="2.5" fill="#101030"/></svg><div class="ct" style="left:22px;top:0px;width:159px;height:32px;flex-direction:column;font-size:11px;line-height:13px;"><span>Сохранить пользовательский</span><span>набор ставок в файл</span></div></div><div class="t" style="left:519px;top:236px;font-size:11px;letter-spacing:0.1px;">Загружен файл польз. набора ставок:D:\Alex\KLC\На отсылку HR\Set\тест.txt</div><div class="btn" style="left:520px;top:253px;width:160px;height:34px;"><svg style="position:absolute;left:4px;top:6px;overflow:visible" width="20" height="20" viewBox="0 0 20 20"><circle cx="10" cy="10" r="8.2" fill="#22DD55" stroke="#000" stroke-width="2.2"/><path d="M10 5 V15 M5 10 H15" stroke="#E0203A" stroke-width="3"/></svg><div class="ct" style="left:22px;top:0px;width:136px;height:32px;flex-direction:column;font-size:11px;line-height:13px;"><span>Добавить ставку в</span><span>пользовательский набор</span></div></div><div class="btn" style="left:688px;top:253px;width:168px;height:34px;"><svg style="position:absolute;left:3px;top:6px;overflow:visible" width="20" height="20" viewBox="0 0 20 20"><circle cx="10" cy="10" r="8.2" fill="#22DD55" stroke="#000" stroke-width="2.2"/><rect x="5" y="8" width="10" height="4" fill="#1A3AB0" stroke="#000" stroke-width="0.6"/></svg><div class="ct" style="left:22px;top:0px;width:144px;height:32px;flex-direction:column;font-size:11px;line-height:13px;"><span>Удалить ставку из</span><span>пользовательского набора</span></div></div><div class="btn" style="left:864px;top:253px;width:168px;height:34px;"><div class="icsq" style="left:1px;top:5px;width:22px;height:21px;"></div><svg style="position:absolute;left:2px;top:6px;overflow:visible" width="20" height="19" viewBox="0 0 20 19"><path d="M13.5 7 L16.5 3.5 Q18 3 18.5 4.5 L15.5 8.5 Z" fill="#5A50D0" stroke="#3A3090" stroke-width="0.5"/><path d="M11 7.5 L13.5 6.5 L16 9 L15 11 Z" fill="#B8B8C8" stroke="#606070" stroke-width="0.5"/><path d="M3 11 Q6 9 8.5 9 L11 7.5 L15 11 L13.5 13.5 Q12 15.5 9.5 16.5 Z" fill="#EEDC70" stroke="#8A7A30" stroke-width="0.6"/></svg><div class="ct" style="left:23px;top:0px;width:143px;height:32px;flex-direction:column;font-size:11px;line-height:13px;"><span>Удалить все ставки из</span><span>пользовательского набора</span></div></div><div class="t" style="left:521px;top:293px;font-size:11px;">Строка добавления и редактирования пользовательского набора ставок.</div><div class="t" style="left:521px;top:306px;font-size:11px;">Разделитель: "+", внутри оператора gr() :"*"</div><div style="left:520px;top:322px;width:505px;height:26px;background:#fff;border:1px solid #7F9DB9;"><div class="t" style="left:2px;top:3px;font-size:16px;line-height:19px;-webkit-text-stroke:0;">1cent+0+gr(1*2*4*5)+gr(7*8*10*11)+gr(13*14*17*16)+gr(19*20*22*23)</div></div><div style="left:513px;top:358px;width:607px;height:41px;border:1px solid #D0D0BF;border-radius:3px;"></div><div class="t" style="left:519px;top:351px;color:#0046D5;background:#FAFAF8;padding:0 2px;font-size:11px;letter-spacing:0.1px;">Кнопки ускоренного заполнения строки ставок</div><div class="btn" style="left:522px;top:368px;width:22px;height:22px;"><svg style="position:absolute;left:-1px;top:-1px;overflow:visible" width="22" height="22" viewBox="0 0 22 22"><circle cx="11" cy="11" r="7.9" fill="#1EEE5E" stroke="#000" stroke-width="2.1"/><text x="11" y="14.6" font-family="Liberation Sans" font-size="10.5" text-anchor="middle" fill="#000" textLength="8" lengthAdjust="spacingAndGlyphs">1€</text></svg></div><div class="btn" style="left:546px;top:368px;width:22px;height:22px;"><svg style="position:absolute;left:-1px;top:-1px;overflow:visible" width="22" height="22" viewBox="0 0 22 22"><circle cx="11" cy="11" r="7.9" fill="#1EEE5E" stroke="#000" stroke-width="2.1"/><text x="11" y="14.6" font-family="Liberation Sans" font-size="10.5" text-anchor="middle" fill="#000" textLength="13" lengthAdjust="spacingAndGlyphs">10€</text></svg></div><div class="btn" style="left:570px;top:368px;width:22px;height:22px;"><svg style="position:absolute;left:-1px;top:-1px;overflow:visible" width="22" height="22" viewBox="0 0 22 22"><circle cx="11" cy="11" r="7.9" fill="#1EEE5E" stroke="#000" stroke-width="2.1"/><text x="11" y="14.6" font-family="Liberation Sans" font-size="10.5" text-anchor="middle" fill="#000" textLength="13" lengthAdjust="spacingAndGlyphs">25€</text></svg></div><div class="btn" style="left:594px;top:368px;width:22px;height:22px;"><svg style="position:absolute;left:-1px;top:-1px;overflow:visible" width="22" height="22" viewBox="0 0 22 22"><circle cx="11" cy="11" r="7.9" fill="#1EEE5E" stroke="#000" stroke-width="2.1"/><text x="11" y="14.6" font-family="Liberation Sans" font-size="10.5" text-anchor="middle" fill="#000" textLength="13" lengthAdjust="spacingAndGlyphs">50€</text></svg></div><div class="btn" style="left:618px;top:368px;width:22px;height:22px;"><svg style="position:absolute;left:-1px;top:-1px;overflow:visible" width="22" height="22" viewBox="0 0 22 22"><circle cx="11" cy="11" r="7.9" fill="#1EEE5E" stroke="#000" stroke-width="2.1"/><text x="11" y="14.6" font-family="Liberation Sans" font-size="10.5" text-anchor="middle" fill="#000" textLength="9" lengthAdjust="spacingAndGlyphs">1$</text></svg></div><div style="left:642px;top:368px;width:22px;height:22px;border:1px solid #C9C7BA;border-radius:3px;background:#F5F4EA;"><svg style="position:absolute;left:-1px;top:-1px;overflow:visible" width="22" height="22" viewBox="0 0 22 22"><circle cx="11" cy="11" r="7.9" fill="none" stroke="#C6C3B6" stroke-width="2"/><text x="11" y="14.6" font-family="Liberation Sans" font-size="10.5" text-anchor="middle" fill="#BEBBAE" textLength="11" lengthAdjust="spacingAndGlyphs">5$</text></svg></div><div class="btn" style="left:674px;top:368px;width:22px;height:22px;"><svg style="position:absolute;left:-1px;top:-1px;overflow:visible" width="22" height="22" viewBox="0 0 22 22"><circle cx="11" cy="11" r="7.9" fill="#1EEE5E" stroke="#000" stroke-width="2.1"/><text x="11" y="14.6" font-family="Liberation Sans" font-size="10.5" text-anchor="middle" fill="#000" textLength="11" lengthAdjust="spacingAndGlyphs">0$</text></svg></div><div class="btn" style="left:730px;top:368px;width:22px;height:22px;"><svg style="position:absolute;left:-1px;top:-1px;overflow:visible" width="22" height="22" viewBox="0 0 22 22"><circle cx="11" cy="11" r="7.9" fill="#1EEE5E" stroke="#000" stroke-width="2.1"/><g transform="translate(1,1)"><path d="M8 5 L14 10 L8 15 Z" fill="#9A2A9A"/></g></svg></div><div class="btn" style="left:754px;top:368px;width:22px;height:22px;"><svg style="position:absolute;left:-1px;top:-1px;overflow:visible" width="22" height="22" viewBox="0 0 22 22"><circle cx="11" cy="11" r="7.9" fill="#1EEE5E" stroke="#000" stroke-width="2.1"/><g transform="translate(1,1)"><path d="M6 9 Q8 4 12 6 Q15 9 11 13" fill="none" stroke="#A030C0" stroke-width="2"/><path d="M9 12 L13 15 L13 10 Z" fill="#A030C0"/></g></svg></div><div class="btn" style="left:778px;top:368px;width:22px;height:22px;"><svg style="position:absolute;left:-1px;top:-1px;overflow:visible" width="22" height="22" viewBox="0 0 22 22"><circle cx="11" cy="11" r="7.9" fill="#1EEE5E" stroke="#000" stroke-width="2.1"/><g transform="translate(1,1)"><path d="M12 4 L15 7 L10 11 L8 9 Z" fill="#3050E0"/><path d="M8 9 L10 11 L8 15 L4 13 Z" fill="#E040C0"/></g></svg></div><div class="btn" style="left:826px;top:368px;width:22px;height:22px;"><svg style="position:absolute;left:-1px;top:-1px;overflow:visible" width="22" height="22" viewBox="0 0 22 22"><circle cx="11" cy="11" r="7.9" fill="#1EEE5E" stroke="#000" stroke-width="2.1"/><g transform="translate(1,1)"><rect x="5.5" y="5.5" width="2" height="2" fill="#2040E0"/><rect x="12.5" y="5.5" width="2" height="2" fill="#2040E0"/><rect x="5.5" y="12.5" width="2" height="2" fill="#2040E0"/><rect x="12.5" y="12.5" width="2" height="2" fill="#2040E0"/><rect x="9" y="9" width="2" height="2" fill="#E02020"/></g></svg></div>
<div style="left:513px;top:405px;width:607px;height:222px;overflow:hidden;border:1px solid #7A9EDF;"><div style="left:0px;top:0px;width:605px;height:220px;background:#A0A0A4;"></div><div style="left:0px;top:0px;width:520px;height:220px;background:#000090;"></div><div style="left:0px;top:0px;width:519px;height:16px;background:#C0DCC0;font-size:12.7px;line-height:17px;text-align:center;white-space:nowrap;overflow:hidden;-webkit-text-stroke:0">1cent+0+gr(25*26)+gr(28*29)+gr(27*30)+gr(33*32)+gr(35*36)+gr(31*34)</div><div style="left:0px;top:17px;width:519px;height:16px;background:#C0DCC0;font-size:12.7px;line-height:17px;text-align:center;white-space:nowrap;overflow:hidden;-webkit-text-stroke:0">1cent+gr(1*2)+gr(2*3)+gr(10*13)+gr(12*15)</div><div style="left:0px;top:34px;width:519px;height:16px;background:#C0DCC0;font-size:12.7px;line-height:17px;text-align:center;white-space:nowrap;overflow:hidden;-webkit-text-stroke:0">1cent+0+gr(1*2*4*5)+gr(7*8*10*11)+gr(13*14*17*16)+gr(19*20*22*23)+gr(25*26*28*29)+...</div><div style="left:0px;top:51px;width:519px;height:16px;background:#C0DCC0;font-size:12.7px;line-height:17px;text-align:center;white-space:nowrap;overflow:hidden;-webkit-text-stroke:0">1cent+0+gr(1*2*4*5)+gr(7*8*10*11)+gr(13*14*17*16)+gr(19*20*22*23)</div><div style="left:0px;top:68px;width:519px;height:16px;background:#C0DCC0;font-size:12.7px;line-height:17px;text-align:center;white-space:nowrap;overflow:hidden;-webkit-text-stroke:0">1cent+0+gr(1*2*4*5)+8+gr(7*8*10*11)</div><div style="left:0px;top:85px;width:519px;height:16px;background:#C0DCC0;font-size:12.7px;line-height:17px;text-align:center;white-space:nowrap;overflow:hidden;-webkit-text-stroke:0">1cent+gr(1*2*4*5)+gr(7*8*10*11)</div><div style="left:0px;top:102px;width:519px;height:16px;background:#C0DCC0;font-size:12.7px;line-height:17px;text-align:center;white-space:nowrap;overflow:hidden;-webkit-text-stroke:0">1cent+gr(5*4*1*2)+5+6+9+10+10cent+23+22</div><div style="left:0px;top:119px;width:519px;height:16px;background:#C0DCC0;font-size:12.7px;line-height:17px;text-align:center;white-space:nowrap;overflow:hidden;-webkit-text-stroke:0">1cent+gr(5412)+5+6+9+10+10cent+23+22</div><div style="left:0px;top:136px;width:519px;height:16px;background:#A0A0A4;font-size:12.7px;line-height:17px;text-align:center;white-space:nowrap;overflow:hidden;-webkit-text-stroke:0"></div><div style="left:0px;top:153px;width:519px;height:16px;background:#A0A0A4;font-size:12.7px;line-height:17px;text-align:center;white-space:nowrap;overflow:hidden;-webkit-text-stroke:0"></div><div style="left:0px;top:170px;width:519px;height:16px;background:#A0A0A4;font-size:12.7px;line-height:17px;text-align:center;white-space:nowrap;overflow:hidden;-webkit-text-stroke:0"></div><div style="left:0px;top:187px;width:519px;height:16px;background:#A0A0A4;font-size:12.7px;line-height:17px;text-align:center;white-space:nowrap;overflow:hidden;-webkit-text-stroke:0"></div><div style="left:0px;top:204px;width:519px;height:20px;background:#A0A0A4;font-size:12.7px;line-height:17px;text-align:center;white-space:nowrap;overflow:hidden;-webkit-text-stroke:0"></div></div>
<div style="left:503px;top:658px;width:624px;height:136px;background:linear-gradient(180deg,#FCFCFE 0%,#F7F6F2 60%,#F2F1EB 100%);border:1px solid #919B9C;"></div><div style="left:505px;top:640px;width:220px;height:18px;background:linear-gradient(180deg,#FFFFFF 0%,#FAFAF8 50%,#EFEEE9 100%);border:1px solid #919B9C;border-bottom:none;border-radius:3px 3px 0 0;"><div class="ct" style="left:0px;top:0px;width:218px;height:18px;font-size:11px;padding-top:1px;"><span>Частота - Zero, шансы, дюжины, колонки</span></div></div><div style="left:726px;top:640px;width:158px;height:18px;background:linear-gradient(180deg,#FFFFFF 0%,#FAFAF8 50%,#EFEEE9 100%);border:1px solid #919B9C;border-bottom:none;border-radius:3px 3px 0 0;"><div class="ct" style="left:0px;top:0px;width:156px;height:18px;font-size:11px;padding-top:1px;"><span>Частота - сиклайны, сектора</span></div></div><div style="left:884px;top:638px;width:46px;height:21px;background:#FCFCFE;border:1px solid #919B9C;border-bottom:none;border-radius:3px 3px 0 0;z-index:2;"><div style="left:-1px;top:-1px;width:46px;height:3px;background:#FFC83C;border-radius:3px 3px 0 0;border-top:1px solid #E68B2C;"></div><div class="ct" style="left:0px;top:0px;width:44px;height:20px;font-size:11px;padding-bottom:1px;"><span>MD5</span></div></div><div class="btn" style="left:508px;top:668px;width:71px;height:89px;"><div class="ct" style="left:0;top:0;width:69px;height:87px;flex-direction:column;font-size:11px;line-height:13px;"><span>Очистка</span><span>Вставка</span><span>Расчет MD5</span></div></div><div class="btn" style="left:583px;top:668px;width:79px;height:18px;"><div class="ct" style="left:0px;top:0px;width:77px;height:16px;font-size:11px;"><span>Очистить</span></div></div><div class="btn" style="left:583px;top:692px;width:79px;height:31px;"><div class="ct" style="left:0px;top:0px;width:77px;height:29px;flex-direction:column;font-size:11px;line-height:13px;"><span>Очистить и</span><span>вставить</span></div></div><div class="btn" style="left:583px;top:727px;width:79px;height:30px;"><div class="ct" style="left:0px;top:0px;width:77px;height:28px;font-size:11px;"><span>Расчет MD5</span></div></div><div class="btn" style="left:511px;top:763px;width:148px;height:28px;"><div class="ct" style="left:0px;top:0px;width:146px;height:26px;flex-direction:column;font-size:11px;line-height:13px;"><span>Очистить и&nbsp; вставить</span><span>во вспом. строку</span></div></div><div class="t" style="left:668px;top:662px;font-size:11px;">Исходная строка</div><div style="left:668px;top:678px;width:299px;height:22px;background:#fff;border:1px solid #7F9DB9;"></div><div class="t" style="left:668px;top:707px;font-size:11px;">Выходная строка MD5</div><div style="left:668px;top:723px;width:299px;height:21px;background:#fff;border:1px solid #7F9DB9;"></div><div class="t" style="left:668px;top:747px;font-size:11px;">Вспомогательная строка: сюда можно все скопировать</div><div style="left:668px;top:763px;width:299px;height:21px;background:#fff;border:1px solid #7F9DB9;"></div><div style="left:804px;top:704px;width:13px;height:13px;border:1px solid #1C5180;background:linear-gradient(135deg,#DCDCD7,#FFFFFF 80%);"></div><div class="t" style="left:820px;top:705px;font-size:11px;">регистр&nbsp; - маленький</div><div class="btn" style="left:972px;top:679px;width:23px;height:24px;"><svg style="position:absolute;left:0px;top:1px;overflow:visible" width="21" height="21" viewBox="0 0 21 21"><circle cx="10.5" cy="10.5" r="8.5" fill="#22DD55" stroke="#000" stroke-width="2.2"/><text x="10.5" y="10" font-family="Liberation Sans" font-size="6.5" text-anchor="middle" fill="#000" textLength="9" lengthAdjust="spacingAndGlyphs">МД</text><text x="10" y="16.5" font-family="Liberation Sans" font-size="8" text-anchor="middle" fill="#000">5</text></svg></div><div class="btn" style="left:972px;top:759px;width:23px;height:24px;"><svg style="position:absolute;left:0px;top:1px;overflow:visible" width="21" height="21" viewBox="0 0 21 21"><circle cx="10.5" cy="10.5" r="8.5" fill="#22DD55" stroke="#000" stroke-width="2.2"/><text x="10.5" y="10" font-family="Liberation Sans" font-size="6.5" text-anchor="middle" fill="#000" textLength="9" lengthAdjust="spacingAndGlyphs">МД</text><text x="10" y="16.5" font-family="Liberation Sans" font-size="8" text-anchor="middle" fill="#000">5</text></svg></div>
</body></html>
